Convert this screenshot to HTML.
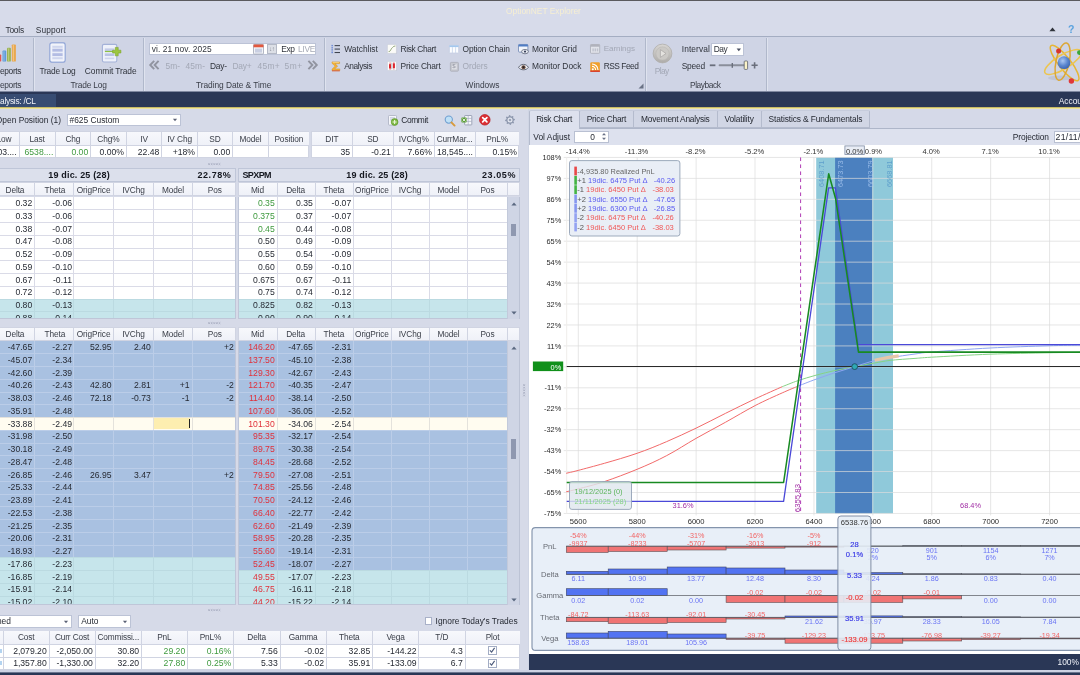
<!DOCTYPE html>
<html><head><meta charset="utf-8"><title>OptionNET Explorer</title>
<style>
html,body{margin:0;padding:0;background:#d6dae8;}
#app{will-change:transform;position:relative;width:1080px;height:675px;overflow:hidden;background:#d6dae8;font-family:"Liberation Sans",sans-serif;font-size:8.4px;color:#262a33;}
#app div{position:absolute;box-sizing:border-box;}
#app .t{white-space:pre;line-height:12px;height:12px;}
#app svg{overflow:visible;}
</style></head><body><div id="app">
<div style="left:0px;top:0px;width:1080px;height:37px;background:#d7dbea;"></div>
<div style="left:0px;top:0px;width:1080px;height:1.2px;background:#5a5a5e;"></div>
<div style="left:0px;top:36.2px;width:1080px;height:1px;background:#a4adc2;"></div>
<div style="left:0px;top:37.2px;width:1080px;height:54.3px;background:#cfd4e5;"></div>
<div style="left:0px;top:91px;width:1080px;height:1px;background:#7f88a0;"></div>
<div style="left:0px;top:92px;width:1080px;height:15px;background:#2a3756;"></div>
<div style="left:0px;top:107px;width:1080px;height:1px;background:#c8bb66;"></div>
<div style="left:0px;top:108px;width:1080px;height:1px;background:#eee39c;"></div>
<div style="left:0px;top:109px;width:1080px;height:1px;background:#dcdde4;"></div>
<div class="t" style="left:443.5px;width:200px;text-align:center;top:5px;color:#f6efd2;font-size:8.4px;">OptionNET Explorer</div>
<div class="t" style="left:5.5px;text-align:left;top:24px;color:#30343c;font-size:8.4px;letter-spacing:-0.238px;">Tools</div>
<div class="t" style="left:35.7px;text-align:left;top:24px;color:#30343c;font-size:8.4px;letter-spacing:0.112px;">Support</div>
<div style="left:32.7px;top:38px;width:1px;height:52.5px;background:#b0b8cb;"></div>
<div style="left:33.7px;top:38px;width:1px;height:52.5px;background:#dfe3ef;"></div>
<div style="left:142.7px;top:38px;width:1px;height:52.5px;background:#b0b8cb;"></div>
<div style="left:143.7px;top:38px;width:1px;height:52.5px;background:#dfe3ef;"></div>
<div style="left:324px;top:38px;width:1px;height:52.5px;background:#b0b8cb;"></div>
<div style="left:325px;top:38px;width:1px;height:52.5px;background:#dfe3ef;"></div>
<div style="left:644.5px;top:38px;width:1px;height:52.5px;background:#b0b8cb;"></div>
<div style="left:645.5px;top:38px;width:1px;height:52.5px;background:#dfe3ef;"></div>
<div style="left:766.2px;top:38px;width:1px;height:52.5px;background:#b0b8cb;"></div>
<div style="left:767.2px;top:38px;width:1px;height:52.5px;background:#dfe3ef;"></div>
<div class="t" style="left:-178.845px;width:200px;text-align:right;top:79px;color:#3a3e48;font-size:8.4px;letter-spacing:-0.345px;">Reports</div>
<div class="t" style="left:-11.391px;width:200px;text-align:center;top:79px;color:#3a3e48;font-size:8.4px;letter-spacing:-0.182px;">Trade Log</div>
<div class="t" style="left:133.668px;width:200px;text-align:center;top:79px;color:#3a3e48;font-size:8.4px;letter-spacing:-0.064px;">Trading Date &amp; Time</div>
<div class="t" style="left:382.481px;width:200px;text-align:center;top:79px;color:#3a3e48;font-size:8.4px;letter-spacing:-0.039px;">Windows</div>
<div class="t" style="left:605.286px;width:200px;text-align:center;top:79px;color:#3a3e48;font-size:8.4px;letter-spacing:-0.428px;">Playback</div>
<svg style="position:absolute;left:637.5px;top:83px" width="6" height="6" viewBox="0 0 6 6"><path d="M5.5 0.5V5.5H0.5Z" fill="#6a7285"/></svg>
<svg style="position:absolute;left:0px;top:43px" width="18" height="20" viewBox="0 0 18 20"><rect x="-2" y="11.4" width="3.2" height="7.2" rx="0.8" fill="#e25656"/><rect x="2.5" y="7.6" width="3.7" height="11" rx="0.9" fill="#5f9bd8"/><rect x="7" y="4.8" width="3.9" height="13.8" rx="0.9" fill="#9cb355"/><rect x="11.8" y="1.4" width="4.1" height="17.2" rx="0.9" fill="#e9a74e"/><rect x="12.8" y="2" width="1.2" height="16" fill="#f4cd92" fill-opacity="0.7"/><rect x="8" y="5.4" width="1.1" height="12.6" fill="#c3d48a" fill-opacity="0.7"/><rect x="3.4" y="8.2" width="1.1" height="9.8" fill="#a3c8ee" fill-opacity="0.7"/></svg>
<div class="t" style="left:-178.845px;width:200px;text-align:right;top:64.7px;color:#30343c;font-size:8.4px;letter-spacing:-0.345px;">Reports</div>
<svg style="position:absolute;left:49px;top:42px" width="17" height="21" viewBox="0 0 17 21"><rect x="0.9" y="0.9" width="15.2" height="19.2" rx="1.6" fill="#e9edf8" stroke="#8ea3d6" stroke-width="1.2"/><rect x="2.2" y="2.2" width="12.6" height="16.6" rx="0.8" fill="none" stroke="#f7f8fd" stroke-width="0.9"/><rect x="3.4" y="4.2" width="10.2" height="1.4" fill="#c9d0ec"/><rect x="3.4" y="6.8" width="10.2" height="2.8" fill="#b3bce3"/><rect x="3.4" y="11.2" width="10.2" height="2.8" fill="#b3bce3"/><rect x="3.4" y="15.4" width="10.2" height="1.4" fill="#c9d0ec"/></svg>
<div class="t" style="left:-42.6065px;width:200px;text-align:center;top:64.7px;color:#30343c;font-size:8.4px;letter-spacing:-0.213px;">Trade Log</div>
<svg style="position:absolute;left:101px;top:42.5px" width="21" height="20" viewBox="0 0 21 20"><rect x="1.4" y="1.4" width="14.4" height="17.6" rx="1.6" fill="#eef1fa" stroke="#a3b1d8" stroke-width="1.1"/><rect x="3.8" y="5.4" width="9.4" height="2.6" fill="#c3cbe8"/><rect x="3.8" y="10.4" width="9.4" height="2.6" fill="#b9c2e5"/><rect x="3.8" y="14.6" width="9.4" height="1.6" fill="#cfd5ee"/><rect x="3.9" y="7.9" width="9.4" height="1.2" fill="#8cc043"/><path d="M11.6 7.2h2.7V4.4h2.9v2.8h2.7v2.8h-2.7v2.8h-2.9v-2.8h-2.7z" fill="#9cc63f" stroke="#7da52c" stroke-width="0.6"/></svg>
<div class="t" style="left:10.6605px;width:200px;text-align:center;top:64.7px;color:#30343c;font-size:8.4px;letter-spacing:-0.079px;">Commit Trade</div>
<div style="left:149.3px;top:43px;width:167px;height:12.2px;background:#ffffff;border:1px solid #bcc3d6;box-sizing:border-box;"></div>
<div class="t" style="left:151.7px;text-align:left;top:43.2px;color:#30343c;font-size:8.4px;letter-spacing:0.102px;">vi. 21 nov. 2025</div>
<svg style="position:absolute;left:253px;top:43.8px" width="11" height="10.6" viewBox="0 0 11 10.6"><rect x="0.5" y="0.5" width="10" height="9.6" rx="0.8" fill="#f3f4f8" stroke="#a0a4b4" stroke-width="0.8"/><rect x="0.5" y="0.5" width="10" height="2.8" fill="#e2583e"/><rect x="2" y="4.6" width="7" height="4" fill="#c9cfe2"/></svg>
<div style="left:266.8px;top:44px;width:10.4px;height:10.2px;background:#dcdfe6;border:1px solid #b4b9c6;box-sizing:border-box;"></div>
<div class="t" style="left:171.7px;width:200px;text-align:center;top:43.3px;color:#8a8e9a;font-size:6.5px;letter-spacing:-0.6px;">↓↑</div>
<div class="t" style="left:281.2px;text-align:left;top:43.2px;color:#30343c;font-size:8.4px;letter-spacing:-0.317px;">Exp</div>
<div class="t" style="left:298px;text-align:left;top:43.2px;color:#a6aab6;font-size:8.4px;letter-spacing:-0.29px;">LIVE</div>
<svg style="position:absolute;left:148.5px;top:60.3px" width="11" height="10" viewBox="0 0 11 10"><path d="M5.2 0.8L1.2 5l4 4.2M9.6 0.8L5.6 5l4 4.2" fill="none" stroke="#9194a0" stroke-width="1.9"/></svg>
<div class="t" style="left:165.5px;text-align:left;top:59.7px;color:#a3a8b6;font-size:8.4px;letter-spacing:0.062px;">5m-</div>
<div class="t" style="left:185.5px;text-align:left;top:59.7px;color:#a3a8b6;font-size:8.4px;letter-spacing:0.151px;">45m-</div>
<div class="t" style="left:210px;text-align:left;top:59.7px;color:#30343c;font-size:8.4px;letter-spacing:-0.215px;">Day-</div>
<div class="t" style="left:232.5px;text-align:left;top:59.7px;color:#a3a8b6;font-size:8.4px;letter-spacing:-0.251px;">Day+</div>
<div class="t" style="left:257.5px;text-align:left;top:59.7px;color:#a3a8b6;font-size:8.4px;letter-spacing:0.281px;">45m+</div>
<div class="t" style="left:284.5px;text-align:left;top:59.7px;color:#a3a8b6;font-size:8.4px;letter-spacing:0.508px;">5m+</div>
<svg style="position:absolute;left:307px;top:60.3px" width="11" height="10" viewBox="0 0 11 10"><path d="M1.4 0.8L5.4 5l-4 4.2M5.8 0.8L9.8 5l-4 4.2" fill="none" stroke="#9194a0" stroke-width="1.9"/></svg>
<div class="t" style="left:344.2px;text-align:left;top:43.3px;color:#30343c;font-size:8.4px;letter-spacing:0.002px;">Watchlist</div>
<div class="t" style="left:344.2px;text-align:left;top:60.4px;color:#30343c;font-size:8.4px;letter-spacing:-0.42px;">Analysis</div>
<div class="t" style="left:400.5px;text-align:left;top:43.3px;color:#30343c;font-size:8.4px;letter-spacing:-0.374px;">Risk Chart</div>
<div class="t" style="left:400.5px;text-align:left;top:60.4px;color:#30343c;font-size:8.4px;letter-spacing:-0.167px;">Price Chart</div>
<div class="t" style="left:462.5px;text-align:left;top:43.3px;color:#30343c;font-size:8.4px;letter-spacing:-0.131px;">Option Chain</div>
<div class="t" style="left:462.5px;text-align:left;top:60.4px;color:#a3a8b6;font-size:8.4px;letter-spacing:-0.066px;">Orders</div>
<div class="t" style="left:532px;text-align:left;top:43.3px;color:#30343c;font-size:8.4px;letter-spacing:-0.102px;">Monitor Grid</div>
<div class="t" style="left:532px;text-align:left;top:60.4px;color:#30343c;font-size:8.4px;letter-spacing:0.01px;">Monitor Dock</div>
<div class="t" style="left:603.7px;text-align:left;top:43.3px;color:#a3a8b6;font-size:8.1px;letter-spacing:-0.094px;">Earnings</div>
<div class="t" style="left:603.7px;text-align:left;top:60.4px;color:#30343c;font-size:8.4px;letter-spacing:-0.487px;">RSS Feed</div>
<svg style="position:absolute;left:331px;top:44.4px" width="10" height="10" viewBox="0 0 10 10"><g fill="#5c7ed2"><rect x="0.5" y="0.9" width="1.3" height="1.3"/><rect x="0.5" y="2.9" width="1.3" height="1"/><rect x="0.5" y="4.5" width="1.3" height="1.3"/><rect x="0.5" y="6.4" width="1.3" height="1"/><rect x="0.5" y="7.9" width="1.3" height="1.3"/></g><g fill="#3e434f"><rect x="3.6" y="1.1" width="5.4" height="1.05"/><rect x="3.6" y="4.55" width="5.4" height="1.05"/><rect x="3.6" y="8" width="5.4" height="1.05"/></g></svg>
<svg style="position:absolute;left:331px;top:60.6px" width="10" height="10.5" viewBox="0 0 10 10.5"><path d="M1 0.9H8.6V2.6H4L6.6 5.1L3.8 7.9H8.8V9.6H1V8.2L4.2 5.1L1 2.3Z" fill="#f2b236" stroke="#d8901c" stroke-width="0.5"/><path d="M1.6 1.5H8" stroke="#fbe29a" stroke-width="0.6"/><rect x="1" y="9.4" width="7.8" height="0.9" fill="#d8563e"/></svg>
<svg style="position:absolute;left:386.8px;top:44px" width="10.4" height="10.4" viewBox="0 0 10.4 10.4"><rect x="0.9" y="0.9" width="9.2" height="9.2" rx="0.6" fill="#c4c8d6"/><rect x="0.4" y="0.4" width="9" height="9" rx="0.6" fill="#fbfbf8" stroke="#c8ccd8" stroke-width="0.6"/><path d="M1.6 7.6C4 7.6 3.6 5.2 4.8 4.2S6 2.2 8.4 2" fill="none" stroke="#8aa070" stroke-width="0.9"/></svg>
<svg style="position:absolute;left:386.8px;top:60.8px" width="10.4" height="10.4" viewBox="0 0 10.4 10.4"><rect x="0.9" y="0.9" width="9.2" height="9.2" rx="0.6" fill="#c4c8d6"/><rect x="0.4" y="0.4" width="9" height="9" rx="0.6" fill="#fdfdfe" stroke="#c8ccd8" stroke-width="0.6"/><rect x="2" y="3.2" width="2" height="4.2" fill="#dc2a30"/><rect x="2.7" y="1.4" width="0.7" height="7.4" fill="#dc2a30"/><rect x="5.9" y="2.4" width="2" height="4.6" fill="#dc2a30"/><rect x="6.6" y="1.2" width="0.7" height="7.4" fill="#dc2a30"/><rect x="4.6" y="1.6" width="0.6" height="6.6" fill="#8a8e9a"/></svg>
<svg style="position:absolute;left:448.8px;top:44.8px" width="10" height="8.6" viewBox="0 0 10 8.6"><rect x="0.4" y="0.4" width="9.2" height="7.6" rx="0.6" fill="#fcfdff" stroke="#c3cde2" stroke-width="0.7"/><rect x="0.4" y="0.4" width="9.2" height="1.7" fill="#a4c8ee"/><path d="M3.4 2.1V8M6.6 2.1V8" stroke="#c6d3ea" stroke-width="0.8"/></svg>
<svg style="position:absolute;left:449.6px;top:61.6px" width="9" height="9.6" viewBox="0 0 9 9.6"><rect x="0.4" y="0.4" width="8" height="8.8" rx="0.8" fill="#c6c8d0" stroke="#a9acb6" stroke-width="0.8"/><rect x="2" y="2.2" width="4.8" height="5.2" fill="#dfe0e6"/></svg>
<div class="t" style="left:354px;width:200px;text-align:center;top:60.2px;color:#8f929e;font-size:6px;">$</div>
<svg style="position:absolute;left:518.4px;top:44.4px" width="11" height="10.4" viewBox="0 0 11 10.4"><rect x="0.5" y="0.5" width="9.4" height="7.6" rx="0.8" fill="#f2f5fb" stroke="#6e86b4" stroke-width="0.8"/><rect x="0.5" y="0.5" width="9.4" height="2" fill="#4f7cc4"/><ellipse cx="7" cy="7.6" rx="3.4" ry="2.2" fill="#e9ecf3" stroke="#50586c" stroke-width="0.7"/><circle cx="7" cy="7.6" r="1.1" fill="#39415a"/></svg>
<svg style="position:absolute;left:518.4px;top:62.6px" width="11" height="8" viewBox="0 0 11 8"><path d="M0.6 4.4C2.6 0.4 8.4 0.4 10.4 4.4C8.4 7.6 2.6 7.6 0.6 4.4Z" fill="#eceef3" stroke="#4a4f5e" stroke-width="0.8"/><circle cx="5.5" cy="4.2" r="2" fill="#6a4a3a"/><circle cx="5.5" cy="4.2" r="0.9" fill="#20222a"/></svg>
<svg style="position:absolute;left:590px;top:44.4px" width="10.4" height="10" viewBox="0 0 10.4 10"><rect x="0.5" y="0.5" width="9.2" height="8.8" rx="0.8" fill="#e1e3ea" stroke="#a9acb6" stroke-width="0.8"/><rect x="0.5" y="0.5" width="9.2" height="2.2" fill="#b0b2bc"/><rect x="2.4" y="4.4" width="1.4" height="3" fill="#bfc2cd"/><rect x="4.6" y="4.4" width="1.4" height="3" fill="#bfc2cd"/><rect x="6.8" y="4.4" width="1.4" height="3" fill="#bfc2cd"/></svg>
<svg style="position:absolute;left:590px;top:61.6px" width="10.2" height="10.4" viewBox="0 0 10.2 10.4"><rect x="0.3" y="0.3" width="9.6" height="9.4" rx="1.2" fill="#f0a02c"/><rect x="0.3" y="8.4" width="9.6" height="1.6" fill="#d8422e"/><circle cx="2.8" cy="7.2" r="1" fill="#fff"/><path d="M2 4.4A3.6 3.6 0 0 1 5.6 8M2 2A6 6 0 0 1 8 8" fill="none" stroke="#fff" stroke-width="1.1"/></svg>
<svg style="position:absolute;left:651.5px;top:42.5px" width="21" height="21" viewBox="0 0 21 21"><defs><linearGradient id="pg" x1="0" y1="0" x2="0" y2="1"><stop offset="0" stop-color="#d8d6d3"/><stop offset="1" stop-color="#aeacaa"/></linearGradient></defs><circle cx="10.5" cy="10.5" r="9.4" fill="url(#pg)" stroke="#b0aeac" stroke-width="0.8"/><circle cx="10.5" cy="10.5" r="6.6" fill="#cbc9c6" stroke="#bab8b6" stroke-width="0.6"/><path d="M8.4 6.6L14 10.5L8.4 14.4Z" fill="#e4e2df" stroke="#a6a4a2" stroke-width="0.7"/></svg>
<div class="t" style="left:561.708px;width:200px;text-align:center;top:64.8px;color:#a3a8b6;font-size:8.4px;letter-spacing:-0.584px;">Play</div>
<div class="t" style="left:681.7px;text-align:left;top:43.3px;color:#30343c;font-size:8.4px;letter-spacing:0.113px;">Interval</div>
<div style="left:710.5px;top:43px;width:33px;height:12.5px;background:#ffffff;border:1px solid #bcc3d6;box-sizing:border-box;"></div>
<div class="t" style="left:713.7px;text-align:left;top:43.3px;color:#30343c;font-size:8.4px;letter-spacing:-0.424px;">Day</div>
<svg style="position:absolute;left:735.6px;top:47.6px" width="6" height="4" viewBox="0 0 6 4"><path d="M0.6 0.6H5L2.8 3.2Z" fill="#4a5062"/></svg>
<div class="t" style="left:681.7px;text-align:left;top:60.3px;color:#30343c;font-size:8.4px;letter-spacing:-0.175px;">Speed</div>
<svg style="position:absolute;left:708.5px;top:59.6px" width="50" height="11" viewBox="0 0 50 11"><rect x="0.8" y="4.4" width="5.6" height="1.8" fill="#6a6f7c"/><rect x="9.6" y="4.3" width="27" height="2" rx="1" fill="#8a8e9a"/><rect x="22.6" y="3" width="1.4" height="4.8" fill="#6a6f7c"/><rect x="35.2" y="1" width="3.4" height="8.4" rx="0.8" fill="#fbf3c8" stroke="#5a5f6c" stroke-width="0.8"/><path d="M45.6 2.2V8.4M42.5 5.3H48.7" stroke="#6a6f7c" stroke-width="1.6"/></svg>
<svg style="position:absolute;left:1048.5px;top:27px" width="7" height="5" viewBox="0 0 7 5"><path d="M3.5 0.6L6.6 4.2H0.4Z" fill="#30343c"/></svg>
<div class="t" style="left:971.3px;width:200px;text-align:center;top:23px;color:#5aa2de;font-size:10.5px;font-weight:bold;">?</div>
<svg style="position:absolute;left:1036px;top:38px" width="44" height="52" viewBox="0 0 44 52"><defs><radialGradient id="sph" cx="0.4" cy="0.35" r="0.7"><stop offset="0" stop-color="#a9c6f2"/><stop offset="0.55" stop-color="#5a86cf"/><stop offset="1" stop-color="#3a62ac"/></radialGradient></defs><ellipse cx="24" cy="40" rx="12" ry="2.6" fill="#b9bfd0" fill-opacity="0.7"/><ellipse cx="28.6" cy="25" rx="22" ry="6" fill="none" stroke="#e6b636" stroke-width="1.5" transform="rotate(52 28.6 25)"/><ellipse cx="27" cy="24" rx="21" ry="7" fill="none" stroke="#ecc550" stroke-width="1.5" transform="rotate(-31 27 24)"/><ellipse cx="26.6" cy="23.6" rx="19" ry="6.6" fill="none" stroke="#dca634" stroke-width="1.5" transform="rotate(-78 26.6 23.6)"/><circle cx="28" cy="24.7" r="6.4" fill="url(#sph)"/><circle cx="22.6" cy="13" r="2.5" fill="#d8362c"/><circle cx="35.4" cy="43" r="2.7" fill="#e0383a"/><circle cx="43.4" cy="14.6" r="2.4" fill="#3aa83a"/></svg>
<div style="left:0px;top:94px;width:55.6px;height:13px;background:#374c72;"></div>
<div class="t" style="left:-164.381px;width:200px;text-align:right;top:95.2px;color:#f2f4fa;font-size:8.4px;letter-spacing:-0.281px;">Analysis: /CL</div>
<div class="t" style="left:1058.7px;text-align:left;top:95.2px;color:#f2f4fa;font-size:8.4px;">Account</div>
<div style="left:0px;top:109px;width:526.3px;height:562px;background:#d6dae8;"></div>
<div style="left:527.5px;top:109px;width:1.3px;height:562px;background:#cfd5e4;"></div>
<div class="t" style="left:-139px;width:200px;text-align:right;top:113.8px;color:#262a33;font-size:8.4px;">Open Position (1)</div>
<div style="left:67px;top:114.3px;width:113.6px;height:11.5px;background:#ffffff;border:1px solid #bcc3d6;"></div><div class="t" style="left:69.5px;text-align:left;top:114.15px;color:#262a33;font-size:8.4px;">#625 Custom</div><svg style="position:absolute;left:171.8px;top:118.25px" width="6" height="4" viewBox="0 0 6 4"><path d="M0.9 0.8H5.1L3 3.2Z" fill="#5a6074"/></svg>
<svg style="position:absolute;left:388px;top:114.5px" width="11" height="11" viewBox="0 0 11 11"><rect x="0.5" y="0.5" width="8" height="9.6" rx="0.8" fill="#f5f6fa" stroke="#a9afc0" stroke-width="0.8"/><rect x="2" y="2.4" width="5" height="1" fill="#b9c1d8"/><rect x="2" y="4.4" width="4" height="1" fill="#b9c1d8"/><circle cx="6.6" cy="7" r="3.4" fill="#7db843" stroke="#5a9426" stroke-width="0.6"/><path d="M4.6 7h4M6.6 5v4" stroke="#eaf6d8" stroke-width="1.1"/></svg>
<div class="t" style="left:401.2px;text-align:left;top:113.9px;color:#262a33;font-size:8.4px;letter-spacing:-0.338px;">Commit</div>
<svg style="position:absolute;left:444px;top:114.5px" width="12" height="11.5" viewBox="0 0 12 11.5"><circle cx="4.8" cy="4.6" r="3.6" fill="#bfe0f6" stroke="#6f9fd0" stroke-width="1.1"/><path d="M7.4 7.4L10.6 10.6" stroke="#d89a3a" stroke-width="1.9" stroke-linecap="round"/></svg>
<svg style="position:absolute;left:461px;top:114.6px" width="11.5" height="10.5" viewBox="0 0 11.5 10.5"><rect x="3.6" y="0.5" width="7.2" height="9.4" rx="0.6" fill="#f6f7fb" stroke="#8c93a8" stroke-width="0.8"/><path d="M3.6 3.4H10.8M3.6 6.4H10.8M7.2 0.5V9.9" stroke="#a6adc2" stroke-width="0.7"/><rect x="0.4" y="2.4" width="5.2" height="5" rx="0.6" fill="#5ea03a"/><path d="M1.6 3.6L4.4 6.4M4.4 3.6L1.6 6.4" stroke="#fff" stroke-width="0.8"/></svg>
<svg style="position:absolute;left:478.6px;top:114.2px" width="11.6" height="11.6" viewBox="0 0 11.6 11.6"><circle cx="5.8" cy="5.8" r="5.3" fill="#dc2f34" stroke="#b41c22" stroke-width="0.7"/><path d="M3.7 3.7L7.9 7.9M7.9 3.7L3.7 7.9" stroke="#fff" stroke-width="1.7" stroke-linecap="round"/></svg>
<svg style="position:absolute;left:505.4px;top:115.2px" width="10" height="10" viewBox="0 0 10 10"><path d="M9.81 4.04L9.90 5.00L8.63 5.72L8.42 6.42L9.07 7.72L8.46 8.46L7.06 8.08L6.42 8.42L5.96 9.81L5.00 9.90L4.28 8.63L3.58 8.42L2.28 9.07L1.54 8.46L1.92 7.06L1.58 6.42L0.19 5.96L0.10 5.00L1.37 4.28L1.58 3.58L0.93 2.28L1.54 1.54L2.94 1.92L3.58 1.58L4.04 0.19L5.00 0.10L5.72 1.37L6.42 1.58L7.72 0.93L8.46 1.54L8.08 2.94L8.42 3.58Z" fill="#8e98ae"/><circle cx="5" cy="5" r="2.5" fill="#e4e7f0"/><circle cx="5" cy="5" r="1.3" fill="#9aa3b8"/></svg>
<div style="left:-2px;top:131.3px;width:311.3px;height:27px;background:#ffffff;border:1px solid #d0d4e2;"></div><div style="left:-1.5px;top:131.8px;width:310.3px;height:13.5px;background:linear-gradient(#f7f8fc,#eff1f8);"></div><div style="left:-2px;top:144.9px;width:311.3px;height:1px;background:#d0d4e2;"></div><div style="left:18.5px;top:131.3px;width:1px;height:27px;background:#d0d4e2;"></div><div style="left:54.8px;top:131.3px;width:1px;height:27px;background:#d0d4e2;"></div><div style="left:90.1px;top:131.3px;width:1px;height:27px;background:#d0d4e2;"></div><div style="left:125.8px;top:131.3px;width:1px;height:27px;background:#d0d4e2;"></div><div style="left:161.3px;top:131.3px;width:1px;height:27px;background:#d0d4e2;"></div><div style="left:196.9px;top:131.3px;width:1px;height:27px;background:#d0d4e2;"></div><div style="left:232.1px;top:131.3px;width:1px;height:27px;background:#d0d4e2;"></div><div style="left:267.9px;top:131.3px;width:1px;height:27px;background:#d0d4e2;"></div><div class="t" style="left:-62.9px;width:200px;text-align:center;top:132.6px;color:#3c404a;font-size:8.3px;letter-spacing:-0.1px;">Last</div><div class="t" style="left:-27.1px;width:200px;text-align:center;top:132.6px;color:#3c404a;font-size:8.3px;letter-spacing:-0.1px;">Chg</div><div class="t" style="left:8.4px;width:200px;text-align:center;top:132.6px;color:#3c404a;font-size:8.3px;letter-spacing:-0.1px;">Chg%</div><div class="t" style="left:44px;width:200px;text-align:center;top:132.6px;color:#3c404a;font-size:8.3px;letter-spacing:-0.1px;">IV</div><div class="t" style="left:79.55px;width:200px;text-align:center;top:132.6px;color:#3c404a;font-size:8.3px;letter-spacing:-0.1px;">IV Chg</div><div class="t" style="left:114.95px;width:200px;text-align:center;top:132.6px;color:#3c404a;font-size:8.3px;letter-spacing:-0.1px;">SD</div><div class="t" style="left:150.45px;width:200px;text-align:center;top:132.6px;color:#3c404a;font-size:8.3px;letter-spacing:-0.1px;">Model</div><div class="t" style="left:188.8px;width:200px;text-align:center;top:132.6px;color:#3c404a;font-size:8.3px;letter-spacing:-0.1px;">Position</div><div class="t" style="left:-183.4px;width:200px;text-align:right;top:146.4px;color:#262a33;font-size:8.65px;">03....</div><div class="t" style="left:24.5px;text-align:left;top:146.4px;color:#3f9a3f;font-size:8.65px;">6538....</div><div class="t" style="left:-111.8px;width:200px;text-align:right;top:146.4px;color:#3f9a3f;font-size:8.65px;">0.00</div><div class="t" style="left:-76.1px;width:200px;text-align:right;top:146.4px;color:#262a33;font-size:8.65px;">0.00%</div><div class="t" style="left:-40.6px;width:200px;text-align:right;top:146.4px;color:#262a33;font-size:8.65px;">22.48</div><div class="t" style="left:-5px;width:200px;text-align:right;top:146.4px;color:#262a33;font-size:8.65px;">+18%</div><div class="t" style="left:30.2px;width:200px;text-align:right;top:146.4px;color:#262a33;font-size:8.65px;">0.00</div>
<div class="t" style="left:-188.5px;width:200px;text-align:right;top:132.6px;color:#3c404a;font-size:8.3px;letter-spacing:-0.1px;">Low</div>
<div style="left:311.3px;top:131.3px;width:208px;height:27px;background:#ffffff;border:1px solid #d0d4e2;"></div><div style="left:311.8px;top:131.8px;width:207px;height:13.5px;background:linear-gradient(#f7f8fc,#eff1f8);"></div><div style="left:311.3px;top:144.9px;width:208px;height:1px;background:#d0d4e2;"></div><div style="left:352px;top:131.3px;width:1px;height:27px;background:#d0d4e2;"></div><div style="left:392.8px;top:131.3px;width:1px;height:27px;background:#d0d4e2;"></div><div style="left:433.8px;top:131.3px;width:1px;height:27px;background:#d0d4e2;"></div><div style="left:474.5px;top:131.3px;width:1px;height:27px;background:#d0d4e2;"></div><div class="t" style="left:231.85px;width:200px;text-align:center;top:132.6px;color:#3c404a;font-size:8.3px;letter-spacing:-0.1px;">DIT</div><div class="t" style="left:272.85px;width:200px;text-align:center;top:132.6px;color:#3c404a;font-size:8.3px;letter-spacing:-0.1px;">SD</div><div class="t" style="left:313.75px;width:200px;text-align:center;top:132.6px;color:#3c404a;font-size:8.3px;letter-spacing:-0.1px;">IVChg%</div><div class="t" style="left:354.6px;width:200px;text-align:center;top:132.6px;color:#3c404a;font-size:8.3px;letter-spacing:-0.1px;">CurrMar...</div><div class="t" style="left:397.1px;width:200px;text-align:center;top:132.6px;color:#3c404a;font-size:8.3px;letter-spacing:-0.1px;">PnL%</div><div class="t" style="left:150.1px;width:200px;text-align:right;top:146.4px;color:#262a33;font-size:8.65px;">35</div><div class="t" style="left:190.9px;width:200px;text-align:right;top:146.4px;color:#262a33;font-size:8.65px;">-0.21</div><div class="t" style="left:231.9px;width:200px;text-align:right;top:146.4px;color:#262a33;font-size:8.65px;">7.66%</div><div class="t" style="left:437px;text-align:left;top:146.4px;color:#262a33;font-size:8.65px;">18,545....</div><div class="t" style="left:316.9px;width:200px;text-align:right;top:146.4px;color:#262a33;font-size:8.65px;">0.15%</div>
<svg style="position:absolute;left:207.5px;top:162.6px" width="14" height="3" viewBox="0 0 14 3"><path d="M0.3 0.3l1.6 1.6m0 -1.6l-1.6 1.6" stroke="#a4aabe" stroke-width="0.8"/><path d="M2.9 0.3l1.6 1.6m0 -1.6l-1.6 1.6" stroke="#a4aabe" stroke-width="0.8"/><path d="M5.5 0.3l1.6 1.6m0 -1.6l-1.6 1.6" stroke="#a4aabe" stroke-width="0.8"/><path d="M8.100000000000001 0.3l1.6 1.6m0 -1.6l-1.6 1.6" stroke="#a4aabe" stroke-width="0.8"/><path d="M10.700000000000001 0.3l1.6 1.6m0 -1.6l-1.6 1.6" stroke="#a4aabe" stroke-width="0.8"/></svg>
<svg style="position:absolute;left:207.5px;top:322px" width="14" height="3" viewBox="0 0 14 3"><path d="M0.3 0.3l1.6 1.6m0 -1.6l-1.6 1.6" stroke="#a4aabe" stroke-width="0.8"/><path d="M2.9 0.3l1.6 1.6m0 -1.6l-1.6 1.6" stroke="#a4aabe" stroke-width="0.8"/><path d="M5.5 0.3l1.6 1.6m0 -1.6l-1.6 1.6" stroke="#a4aabe" stroke-width="0.8"/><path d="M8.100000000000001 0.3l1.6 1.6m0 -1.6l-1.6 1.6" stroke="#a4aabe" stroke-width="0.8"/><path d="M10.700000000000001 0.3l1.6 1.6m0 -1.6l-1.6 1.6" stroke="#a4aabe" stroke-width="0.8"/></svg>
<svg style="position:absolute;left:207.5px;top:609px" width="14" height="3" viewBox="0 0 14 3"><path d="M0.3 0.3l1.6 1.6m0 -1.6l-1.6 1.6" stroke="#a4aabe" stroke-width="0.8"/><path d="M2.9 0.3l1.6 1.6m0 -1.6l-1.6 1.6" stroke="#a4aabe" stroke-width="0.8"/><path d="M5.5 0.3l1.6 1.6m0 -1.6l-1.6 1.6" stroke="#a4aabe" stroke-width="0.8"/><path d="M8.100000000000001 0.3l1.6 1.6m0 -1.6l-1.6 1.6" stroke="#a4aabe" stroke-width="0.8"/><path d="M10.700000000000001 0.3l1.6 1.6m0 -1.6l-1.6 1.6" stroke="#a4aabe" stroke-width="0.8"/></svg>
<div style="left:-2px;top:167.5px;width:237.8px;height:14.5px;background:#dce0ec;border:1px solid #bfc6d8;"></div>
<div style="left:238.4px;top:167.5px;width:281.4px;height:14.5px;background:#dce0ec;border:1px solid #bfc6d8;"></div>
<div class="t" style="left:-20.9155px;width:200px;text-align:center;top:169.2px;color:#14171f;font-size:9px;font-weight:bold;letter-spacing:0.169px;">19 dic. 25 (28)</div>
<div class="t" style="left:31.375px;width:200px;text-align:right;top:169.2px;color:#14171f;font-size:9px;font-weight:bold;letter-spacing:0.575px;">22.78%</div>
<div class="t" style="left:242.4px;text-align:left;top:169.2px;color:#14171f;font-size:9px;font-weight:bold;letter-spacing:-0.577px;">SPXPM</div>
<div class="t" style="left:277.084px;width:200px;text-align:center;top:169.2px;color:#14171f;font-size:9px;font-weight:bold;letter-spacing:0.169px;">19 dic. 25 (28)</div>
<div class="t" style="left:315.975px;width:200px;text-align:right;top:169.2px;color:#14171f;font-size:9px;font-weight:bold;letter-spacing:0.575px;">23.05%</div>
<div style="left:-2px;top:182.4px;width:237.8px;height:14px;background:linear-gradient(#f7f8fc,#eff1f8);border:1px solid #d0d4e2;"></div><div style="left:238.4px;top:182.4px;width:281.4px;height:14px;background:linear-gradient(#f7f8fc,#eff1f8);border:1px solid #d0d4e2;"></div><div style="left:34px;top:182.4px;width:1px;height:14px;background:#d0d4e2;"></div><div style="left:73.3px;top:182.4px;width:1px;height:14px;background:#d0d4e2;"></div><div style="left:112.8px;top:182.4px;width:1px;height:14px;background:#d0d4e2;"></div><div style="left:152.5px;top:182.4px;width:1px;height:14px;background:#d0d4e2;"></div><div style="left:192px;top:182.4px;width:1px;height:14px;background:#d0d4e2;"></div><div style="left:276.5px;top:182.4px;width:1px;height:14px;background:#d0d4e2;"></div><div style="left:314.5px;top:182.4px;width:1px;height:14px;background:#d0d4e2;"></div><div style="left:352.7px;top:182.4px;width:1px;height:14px;background:#d0d4e2;"></div><div style="left:390.7px;top:182.4px;width:1px;height:14px;background:#d0d4e2;"></div><div style="left:428.8px;top:182.4px;width:1px;height:14px;background:#d0d4e2;"></div><div style="left:467px;top:182.4px;width:1px;height:14px;background:#d0d4e2;"></div><div style="left:506.5px;top:182.4px;width:1px;height:14px;background:#d0d4e2;"></div><div class="t" style="left:-85.05px;width:200px;text-align:center;top:183.7px;color:#3c404a;font-size:8.3px;letter-spacing:-0.1px;">Delta</div><div class="t" style="left:-45.05px;width:200px;text-align:center;top:183.7px;color:#3c404a;font-size:8.3px;letter-spacing:-0.1px;">Theta</div><div class="t" style="left:-6.45px;width:200px;text-align:center;top:183.7px;color:#3c404a;font-size:8.3px;letter-spacing:-0.1px;">OrigPrice</div><div class="t" style="left:33.45px;width:200px;text-align:center;top:183.7px;color:#3c404a;font-size:8.3px;letter-spacing:-0.1px;">IVChg</div><div class="t" style="left:72.95px;width:200px;text-align:center;top:183.7px;color:#3c404a;font-size:8.3px;letter-spacing:-0.1px;">Model</div><div class="t" style="left:114.75px;width:200px;text-align:center;top:183.7px;color:#3c404a;font-size:8.3px;letter-spacing:-0.1px;">Pos</div><div class="t" style="left:157.45px;width:200px;text-align:center;top:183.7px;color:#3c404a;font-size:8.3px;letter-spacing:-0.1px;">Mid</div><div class="t" style="left:195.65px;width:200px;text-align:center;top:183.7px;color:#3c404a;font-size:8.3px;letter-spacing:-0.1px;">Delta</div><div class="t" style="left:233.95px;width:200px;text-align:center;top:183.7px;color:#3c404a;font-size:8.3px;letter-spacing:-0.1px;">Theta</div><div class="t" style="left:271.95px;width:200px;text-align:center;top:183.7px;color:#3c404a;font-size:8.3px;letter-spacing:-0.1px;">OrigPrice</div><div class="t" style="left:309.95px;width:200px;text-align:center;top:183.7px;color:#3c404a;font-size:8.3px;letter-spacing:-0.1px;">IVChg</div><div class="t" style="left:348.45px;width:200px;text-align:center;top:183.7px;color:#3c404a;font-size:8.3px;letter-spacing:-0.1px;">Model</div><div class="t" style="left:387.45px;width:200px;text-align:center;top:183.7px;color:#3c404a;font-size:8.3px;letter-spacing:-0.1px;">Pos</div>
<div style="left:0px;top:196.5px;width:519.8px;height:122.1px;overflow:hidden;"><div style="left:-2px;top:0px;width:237.8px;height:13.75px;background:#ffffff;border-top:1px solid #ffffff;"></div><div style="left:238.4px;top:0px;width:268.6px;height:13.75px;background:#ffffff;border-top:1px solid #ffffff;"></div><div style="left:34px;top:0px;width:1px;height:12.75px;background:#dadbe7;"></div><div style="left:73.3px;top:0px;width:1px;height:12.75px;background:#dadbe7;"></div><div style="left:112.8px;top:0px;width:1px;height:12.75px;background:#dadbe7;"></div><div style="left:152.5px;top:0px;width:1px;height:12.75px;background:#dadbe7;"></div><div style="left:192px;top:0px;width:1px;height:12.75px;background:#dadbe7;"></div><div style="left:276.5px;top:0px;width:1px;height:12.75px;background:#dadbe7;"></div><div style="left:314.5px;top:0px;width:1px;height:12.75px;background:#dadbe7;"></div><div style="left:352.7px;top:0px;width:1px;height:12.75px;background:#dadbe7;"></div><div style="left:390.7px;top:0px;width:1px;height:12.75px;background:#dadbe7;"></div><div style="left:428.8px;top:0px;width:1px;height:12.75px;background:#dadbe7;"></div><div style="left:467px;top:0px;width:1px;height:12.75px;background:#dadbe7;"></div><div class="t" style="left:-167.8px;width:200px;text-align:right;top:0.575px;color:#262a33;font-size:8.65px;">0.32</div><div class="t" style="left:-128px;width:200px;text-align:right;top:0.575px;color:#262a33;font-size:8.65px;">-0.06</div><div class="t" style="left:74.7px;width:200px;text-align:right;top:0.575px;color:#3f9a3f;font-size:8.65px;">0.35</div><div class="t" style="left:112.8px;width:200px;text-align:right;top:0.575px;color:#262a33;font-size:8.65px;">0.35</div><div class="t" style="left:151.2px;width:200px;text-align:right;top:0.575px;color:#262a33;font-size:8.65px;">-0.07</div><div style="left:-2px;top:12.75px;width:237.8px;height:13.75px;background:#ffffff;border-top:1px solid #dadbe7;"></div><div style="left:238.4px;top:12.75px;width:268.6px;height:13.75px;background:#ffffff;border-top:1px solid #dadbe7;"></div><div style="left:34px;top:12.75px;width:1px;height:12.75px;background:#dadbe7;"></div><div style="left:73.3px;top:12.75px;width:1px;height:12.75px;background:#dadbe7;"></div><div style="left:112.8px;top:12.75px;width:1px;height:12.75px;background:#dadbe7;"></div><div style="left:152.5px;top:12.75px;width:1px;height:12.75px;background:#dadbe7;"></div><div style="left:192px;top:12.75px;width:1px;height:12.75px;background:#dadbe7;"></div><div style="left:276.5px;top:12.75px;width:1px;height:12.75px;background:#dadbe7;"></div><div style="left:314.5px;top:12.75px;width:1px;height:12.75px;background:#dadbe7;"></div><div style="left:352.7px;top:12.75px;width:1px;height:12.75px;background:#dadbe7;"></div><div style="left:390.7px;top:12.75px;width:1px;height:12.75px;background:#dadbe7;"></div><div style="left:428.8px;top:12.75px;width:1px;height:12.75px;background:#dadbe7;"></div><div style="left:467px;top:12.75px;width:1px;height:12.75px;background:#dadbe7;"></div><div class="t" style="left:-167.8px;width:200px;text-align:right;top:13.325px;color:#262a33;font-size:8.65px;">0.33</div><div class="t" style="left:-128px;width:200px;text-align:right;top:13.325px;color:#262a33;font-size:8.65px;">-0.06</div><div class="t" style="left:74.7px;width:200px;text-align:right;top:13.325px;color:#3f9a3f;font-size:8.65px;">0.375</div><div class="t" style="left:112.8px;width:200px;text-align:right;top:13.325px;color:#262a33;font-size:8.65px;">0.37</div><div class="t" style="left:151.2px;width:200px;text-align:right;top:13.325px;color:#262a33;font-size:8.65px;">-0.07</div><div style="left:-2px;top:25.5px;width:237.8px;height:13.75px;background:#ffffff;border-top:1px solid #dadbe7;"></div><div style="left:238.4px;top:25.5px;width:268.6px;height:13.75px;background:#ffffff;border-top:1px solid #dadbe7;"></div><div style="left:34px;top:25.5px;width:1px;height:12.75px;background:#dadbe7;"></div><div style="left:73.3px;top:25.5px;width:1px;height:12.75px;background:#dadbe7;"></div><div style="left:112.8px;top:25.5px;width:1px;height:12.75px;background:#dadbe7;"></div><div style="left:152.5px;top:25.5px;width:1px;height:12.75px;background:#dadbe7;"></div><div style="left:192px;top:25.5px;width:1px;height:12.75px;background:#dadbe7;"></div><div style="left:276.5px;top:25.5px;width:1px;height:12.75px;background:#dadbe7;"></div><div style="left:314.5px;top:25.5px;width:1px;height:12.75px;background:#dadbe7;"></div><div style="left:352.7px;top:25.5px;width:1px;height:12.75px;background:#dadbe7;"></div><div style="left:390.7px;top:25.5px;width:1px;height:12.75px;background:#dadbe7;"></div><div style="left:428.8px;top:25.5px;width:1px;height:12.75px;background:#dadbe7;"></div><div style="left:467px;top:25.5px;width:1px;height:12.75px;background:#dadbe7;"></div><div class="t" style="left:-167.8px;width:200px;text-align:right;top:26.075px;color:#262a33;font-size:8.65px;">0.38</div><div class="t" style="left:-128px;width:200px;text-align:right;top:26.075px;color:#262a33;font-size:8.65px;">-0.07</div><div class="t" style="left:74.7px;width:200px;text-align:right;top:26.075px;color:#3f9a3f;font-size:8.65px;">0.45</div><div class="t" style="left:112.8px;width:200px;text-align:right;top:26.075px;color:#262a33;font-size:8.65px;">0.44</div><div class="t" style="left:151.2px;width:200px;text-align:right;top:26.075px;color:#262a33;font-size:8.65px;">-0.08</div><div style="left:-2px;top:38.25px;width:237.8px;height:13.75px;background:#ffffff;border-top:1px solid #dadbe7;"></div><div style="left:238.4px;top:38.25px;width:268.6px;height:13.75px;background:#ffffff;border-top:1px solid #dadbe7;"></div><div style="left:34px;top:38.25px;width:1px;height:12.75px;background:#dadbe7;"></div><div style="left:73.3px;top:38.25px;width:1px;height:12.75px;background:#dadbe7;"></div><div style="left:112.8px;top:38.25px;width:1px;height:12.75px;background:#dadbe7;"></div><div style="left:152.5px;top:38.25px;width:1px;height:12.75px;background:#dadbe7;"></div><div style="left:192px;top:38.25px;width:1px;height:12.75px;background:#dadbe7;"></div><div style="left:276.5px;top:38.25px;width:1px;height:12.75px;background:#dadbe7;"></div><div style="left:314.5px;top:38.25px;width:1px;height:12.75px;background:#dadbe7;"></div><div style="left:352.7px;top:38.25px;width:1px;height:12.75px;background:#dadbe7;"></div><div style="left:390.7px;top:38.25px;width:1px;height:12.75px;background:#dadbe7;"></div><div style="left:428.8px;top:38.25px;width:1px;height:12.75px;background:#dadbe7;"></div><div style="left:467px;top:38.25px;width:1px;height:12.75px;background:#dadbe7;"></div><div class="t" style="left:-167.8px;width:200px;text-align:right;top:38.825px;color:#262a33;font-size:8.65px;">0.47</div><div class="t" style="left:-128px;width:200px;text-align:right;top:38.825px;color:#262a33;font-size:8.65px;">-0.08</div><div class="t" style="left:74.7px;width:200px;text-align:right;top:38.825px;color:#262a33;font-size:8.65px;">0.50</div><div class="t" style="left:112.8px;width:200px;text-align:right;top:38.825px;color:#262a33;font-size:8.65px;">0.49</div><div class="t" style="left:151.2px;width:200px;text-align:right;top:38.825px;color:#262a33;font-size:8.65px;">-0.09</div><div style="left:-2px;top:51px;width:237.8px;height:13.75px;background:#ffffff;border-top:1px solid #dadbe7;"></div><div style="left:238.4px;top:51px;width:268.6px;height:13.75px;background:#ffffff;border-top:1px solid #dadbe7;"></div><div style="left:34px;top:51px;width:1px;height:12.75px;background:#dadbe7;"></div><div style="left:73.3px;top:51px;width:1px;height:12.75px;background:#dadbe7;"></div><div style="left:112.8px;top:51px;width:1px;height:12.75px;background:#dadbe7;"></div><div style="left:152.5px;top:51px;width:1px;height:12.75px;background:#dadbe7;"></div><div style="left:192px;top:51px;width:1px;height:12.75px;background:#dadbe7;"></div><div style="left:276.5px;top:51px;width:1px;height:12.75px;background:#dadbe7;"></div><div style="left:314.5px;top:51px;width:1px;height:12.75px;background:#dadbe7;"></div><div style="left:352.7px;top:51px;width:1px;height:12.75px;background:#dadbe7;"></div><div style="left:390.7px;top:51px;width:1px;height:12.75px;background:#dadbe7;"></div><div style="left:428.8px;top:51px;width:1px;height:12.75px;background:#dadbe7;"></div><div style="left:467px;top:51px;width:1px;height:12.75px;background:#dadbe7;"></div><div class="t" style="left:-167.8px;width:200px;text-align:right;top:51.575px;color:#262a33;font-size:8.65px;">0.52</div><div class="t" style="left:-128px;width:200px;text-align:right;top:51.575px;color:#262a33;font-size:8.65px;">-0.09</div><div class="t" style="left:74.7px;width:200px;text-align:right;top:51.575px;color:#262a33;font-size:8.65px;">0.55</div><div class="t" style="left:112.8px;width:200px;text-align:right;top:51.575px;color:#262a33;font-size:8.65px;">0.54</div><div class="t" style="left:151.2px;width:200px;text-align:right;top:51.575px;color:#262a33;font-size:8.65px;">-0.09</div><div style="left:-2px;top:63.75px;width:237.8px;height:13.75px;background:#ffffff;border-top:1px solid #dadbe7;"></div><div style="left:238.4px;top:63.75px;width:268.6px;height:13.75px;background:#ffffff;border-top:1px solid #dadbe7;"></div><div style="left:34px;top:63.75px;width:1px;height:12.75px;background:#dadbe7;"></div><div style="left:73.3px;top:63.75px;width:1px;height:12.75px;background:#dadbe7;"></div><div style="left:112.8px;top:63.75px;width:1px;height:12.75px;background:#dadbe7;"></div><div style="left:152.5px;top:63.75px;width:1px;height:12.75px;background:#dadbe7;"></div><div style="left:192px;top:63.75px;width:1px;height:12.75px;background:#dadbe7;"></div><div style="left:276.5px;top:63.75px;width:1px;height:12.75px;background:#dadbe7;"></div><div style="left:314.5px;top:63.75px;width:1px;height:12.75px;background:#dadbe7;"></div><div style="left:352.7px;top:63.75px;width:1px;height:12.75px;background:#dadbe7;"></div><div style="left:390.7px;top:63.75px;width:1px;height:12.75px;background:#dadbe7;"></div><div style="left:428.8px;top:63.75px;width:1px;height:12.75px;background:#dadbe7;"></div><div style="left:467px;top:63.75px;width:1px;height:12.75px;background:#dadbe7;"></div><div class="t" style="left:-167.8px;width:200px;text-align:right;top:64.325px;color:#262a33;font-size:8.65px;">0.59</div><div class="t" style="left:-128px;width:200px;text-align:right;top:64.325px;color:#262a33;font-size:8.65px;">-0.10</div><div class="t" style="left:74.7px;width:200px;text-align:right;top:64.325px;color:#262a33;font-size:8.65px;">0.60</div><div class="t" style="left:112.8px;width:200px;text-align:right;top:64.325px;color:#262a33;font-size:8.65px;">0.59</div><div class="t" style="left:151.2px;width:200px;text-align:right;top:64.325px;color:#262a33;font-size:8.65px;">-0.10</div><div style="left:-2px;top:76.5px;width:237.8px;height:13.75px;background:#ffffff;border-top:1px solid #dadbe7;"></div><div style="left:238.4px;top:76.5px;width:268.6px;height:13.75px;background:#ffffff;border-top:1px solid #dadbe7;"></div><div style="left:34px;top:76.5px;width:1px;height:12.75px;background:#dadbe7;"></div><div style="left:73.3px;top:76.5px;width:1px;height:12.75px;background:#dadbe7;"></div><div style="left:112.8px;top:76.5px;width:1px;height:12.75px;background:#dadbe7;"></div><div style="left:152.5px;top:76.5px;width:1px;height:12.75px;background:#dadbe7;"></div><div style="left:192px;top:76.5px;width:1px;height:12.75px;background:#dadbe7;"></div><div style="left:276.5px;top:76.5px;width:1px;height:12.75px;background:#dadbe7;"></div><div style="left:314.5px;top:76.5px;width:1px;height:12.75px;background:#dadbe7;"></div><div style="left:352.7px;top:76.5px;width:1px;height:12.75px;background:#dadbe7;"></div><div style="left:390.7px;top:76.5px;width:1px;height:12.75px;background:#dadbe7;"></div><div style="left:428.8px;top:76.5px;width:1px;height:12.75px;background:#dadbe7;"></div><div style="left:467px;top:76.5px;width:1px;height:12.75px;background:#dadbe7;"></div><div class="t" style="left:-167.8px;width:200px;text-align:right;top:77.075px;color:#262a33;font-size:8.65px;">0.67</div><div class="t" style="left:-128px;width:200px;text-align:right;top:77.075px;color:#262a33;font-size:8.65px;">-0.11</div><div class="t" style="left:74.7px;width:200px;text-align:right;top:77.075px;color:#262a33;font-size:8.65px;">0.675</div><div class="t" style="left:112.8px;width:200px;text-align:right;top:77.075px;color:#262a33;font-size:8.65px;">0.67</div><div class="t" style="left:151.2px;width:200px;text-align:right;top:77.075px;color:#262a33;font-size:8.65px;">-0.11</div><div style="left:-2px;top:89.25px;width:237.8px;height:13.75px;background:#ffffff;border-top:1px solid #dadbe7;"></div><div style="left:238.4px;top:89.25px;width:268.6px;height:13.75px;background:#ffffff;border-top:1px solid #dadbe7;"></div><div style="left:34px;top:89.25px;width:1px;height:12.75px;background:#dadbe7;"></div><div style="left:73.3px;top:89.25px;width:1px;height:12.75px;background:#dadbe7;"></div><div style="left:112.8px;top:89.25px;width:1px;height:12.75px;background:#dadbe7;"></div><div style="left:152.5px;top:89.25px;width:1px;height:12.75px;background:#dadbe7;"></div><div style="left:192px;top:89.25px;width:1px;height:12.75px;background:#dadbe7;"></div><div style="left:276.5px;top:89.25px;width:1px;height:12.75px;background:#dadbe7;"></div><div style="left:314.5px;top:89.25px;width:1px;height:12.75px;background:#dadbe7;"></div><div style="left:352.7px;top:89.25px;width:1px;height:12.75px;background:#dadbe7;"></div><div style="left:390.7px;top:89.25px;width:1px;height:12.75px;background:#dadbe7;"></div><div style="left:428.8px;top:89.25px;width:1px;height:12.75px;background:#dadbe7;"></div><div style="left:467px;top:89.25px;width:1px;height:12.75px;background:#dadbe7;"></div><div class="t" style="left:-167.8px;width:200px;text-align:right;top:89.825px;color:#262a33;font-size:8.65px;">0.72</div><div class="t" style="left:-128px;width:200px;text-align:right;top:89.825px;color:#262a33;font-size:8.65px;">-0.12</div><div class="t" style="left:74.7px;width:200px;text-align:right;top:89.825px;color:#262a33;font-size:8.65px;">0.75</div><div class="t" style="left:112.8px;width:200px;text-align:right;top:89.825px;color:#262a33;font-size:8.65px;">0.74</div><div class="t" style="left:151.2px;width:200px;text-align:right;top:89.825px;color:#262a33;font-size:8.65px;">-0.12</div><div style="left:-2px;top:102px;width:237.8px;height:13.75px;background:#c6e5eb;border-top:1px solid #bbdae1;"></div><div style="left:238.4px;top:102px;width:268.6px;height:13.75px;background:#c6e5eb;border-top:1px solid #bbdae1;"></div><div style="left:34px;top:102px;width:1px;height:12.75px;background:#bbdae1;"></div><div style="left:73.3px;top:102px;width:1px;height:12.75px;background:#bbdae1;"></div><div style="left:112.8px;top:102px;width:1px;height:12.75px;background:#bbdae1;"></div><div style="left:152.5px;top:102px;width:1px;height:12.75px;background:#bbdae1;"></div><div style="left:192px;top:102px;width:1px;height:12.75px;background:#bbdae1;"></div><div style="left:276.5px;top:102px;width:1px;height:12.75px;background:#bbdae1;"></div><div style="left:314.5px;top:102px;width:1px;height:12.75px;background:#bbdae1;"></div><div style="left:352.7px;top:102px;width:1px;height:12.75px;background:#bbdae1;"></div><div style="left:390.7px;top:102px;width:1px;height:12.75px;background:#bbdae1;"></div><div style="left:428.8px;top:102px;width:1px;height:12.75px;background:#bbdae1;"></div><div style="left:467px;top:102px;width:1px;height:12.75px;background:#bbdae1;"></div><div class="t" style="left:-167.8px;width:200px;text-align:right;top:102.575px;color:#262a33;font-size:8.65px;">0.80</div><div class="t" style="left:-128px;width:200px;text-align:right;top:102.575px;color:#262a33;font-size:8.65px;">-0.13</div><div class="t" style="left:74.7px;width:200px;text-align:right;top:102.575px;color:#262a33;font-size:8.65px;">0.825</div><div class="t" style="left:112.8px;width:200px;text-align:right;top:102.575px;color:#262a33;font-size:8.65px;">0.82</div><div class="t" style="left:151.2px;width:200px;text-align:right;top:102.575px;color:#262a33;font-size:8.65px;">-0.13</div><div style="left:-2px;top:114.75px;width:237.8px;height:13.75px;background:#c6e5eb;border-top:1px solid #bbdae1;"></div><div style="left:238.4px;top:114.75px;width:268.6px;height:13.75px;background:#c6e5eb;border-top:1px solid #bbdae1;"></div><div style="left:34px;top:114.75px;width:1px;height:12.75px;background:#bbdae1;"></div><div style="left:73.3px;top:114.75px;width:1px;height:12.75px;background:#bbdae1;"></div><div style="left:112.8px;top:114.75px;width:1px;height:12.75px;background:#bbdae1;"></div><div style="left:152.5px;top:114.75px;width:1px;height:12.75px;background:#bbdae1;"></div><div style="left:192px;top:114.75px;width:1px;height:12.75px;background:#bbdae1;"></div><div style="left:276.5px;top:114.75px;width:1px;height:12.75px;background:#bbdae1;"></div><div style="left:314.5px;top:114.75px;width:1px;height:12.75px;background:#bbdae1;"></div><div style="left:352.7px;top:114.75px;width:1px;height:12.75px;background:#bbdae1;"></div><div style="left:390.7px;top:114.75px;width:1px;height:12.75px;background:#bbdae1;"></div><div style="left:428.8px;top:114.75px;width:1px;height:12.75px;background:#bbdae1;"></div><div style="left:467px;top:114.75px;width:1px;height:12.75px;background:#bbdae1;"></div><div class="t" style="left:-167.8px;width:200px;text-align:right;top:115.325px;color:#262a33;font-size:8.65px;">0.88</div><div class="t" style="left:-128px;width:200px;text-align:right;top:115.325px;color:#262a33;font-size:8.65px;">-0.14</div><div class="t" style="left:74.7px;width:200px;text-align:right;top:115.325px;color:#262a33;font-size:8.65px;">0.90</div><div class="t" style="left:112.8px;width:200px;text-align:right;top:115.325px;color:#262a33;font-size:8.65px;">0.90</div><div class="t" style="left:151.2px;width:200px;text-align:right;top:115.325px;color:#262a33;font-size:8.65px;">-0.14</div></div><div style="left:234.8px;top:196.5px;width:1px;height:122.1px;background:#bfc6d8;"></div><div style="left:238.4px;top:196.5px;width:1px;height:122.1px;background:#bfc6d8;"></div><div style="left:-2px;top:317.6px;width:237.8px;height:1px;background:#bfc6d8;"></div><div style="left:238.4px;top:317.6px;width:281.4px;height:1px;background:#bfc6d8;"></div>
<div style="left:507px;top:196.5px;width:12.8px;height:122.1px;background:#cfd5e5;border-left:1px solid #c3cadb;border-right:1px solid #bcc3d5;"></div><svg style="position:absolute;left:510.6px;top:201.5px" width="6" height="4" viewBox="0 0 6 4"><path d="M3 0.4L5.6 3.6H0.4Z" fill="#5a6880"/></svg><svg style="position:absolute;left:510.6px;top:311.2px" width="6" height="4" viewBox="0 0 6 4"><path d="M3 3.6L5.6 0.4H0.4Z" fill="#5a6880"/></svg><div style="left:511px;top:223.8px;width:5.2px;height:12.4px;background:#8f98b0;"></div>
<div style="left:-2px;top:326.8px;width:237.8px;height:14px;background:linear-gradient(#f7f8fc,#eff1f8);border:1px solid #d0d4e2;"></div><div style="left:238.4px;top:326.8px;width:281.4px;height:14px;background:linear-gradient(#f7f8fc,#eff1f8);border:1px solid #d0d4e2;"></div><div style="left:34px;top:326.8px;width:1px;height:14px;background:#d0d4e2;"></div><div style="left:73.3px;top:326.8px;width:1px;height:14px;background:#d0d4e2;"></div><div style="left:112.8px;top:326.8px;width:1px;height:14px;background:#d0d4e2;"></div><div style="left:152.5px;top:326.8px;width:1px;height:14px;background:#d0d4e2;"></div><div style="left:192px;top:326.8px;width:1px;height:14px;background:#d0d4e2;"></div><div style="left:276.5px;top:326.8px;width:1px;height:14px;background:#d0d4e2;"></div><div style="left:314.5px;top:326.8px;width:1px;height:14px;background:#d0d4e2;"></div><div style="left:352.7px;top:326.8px;width:1px;height:14px;background:#d0d4e2;"></div><div style="left:390.7px;top:326.8px;width:1px;height:14px;background:#d0d4e2;"></div><div style="left:428.8px;top:326.8px;width:1px;height:14px;background:#d0d4e2;"></div><div style="left:467px;top:326.8px;width:1px;height:14px;background:#d0d4e2;"></div><div style="left:506.5px;top:326.8px;width:1px;height:14px;background:#d0d4e2;"></div><div class="t" style="left:-85.05px;width:200px;text-align:center;top:328.1px;color:#3c404a;font-size:8.3px;letter-spacing:-0.1px;">Delta</div><div class="t" style="left:-45.05px;width:200px;text-align:center;top:328.1px;color:#3c404a;font-size:8.3px;letter-spacing:-0.1px;">Theta</div><div class="t" style="left:-6.45px;width:200px;text-align:center;top:328.1px;color:#3c404a;font-size:8.3px;letter-spacing:-0.1px;">OrigPrice</div><div class="t" style="left:33.45px;width:200px;text-align:center;top:328.1px;color:#3c404a;font-size:8.3px;letter-spacing:-0.1px;">IVChg</div><div class="t" style="left:72.95px;width:200px;text-align:center;top:328.1px;color:#3c404a;font-size:8.3px;letter-spacing:-0.1px;">Model</div><div class="t" style="left:114.75px;width:200px;text-align:center;top:328.1px;color:#3c404a;font-size:8.3px;letter-spacing:-0.1px;">Pos</div><div class="t" style="left:157.45px;width:200px;text-align:center;top:328.1px;color:#3c404a;font-size:8.3px;letter-spacing:-0.1px;">Mid</div><div class="t" style="left:195.65px;width:200px;text-align:center;top:328.1px;color:#3c404a;font-size:8.3px;letter-spacing:-0.1px;">Delta</div><div class="t" style="left:233.95px;width:200px;text-align:center;top:328.1px;color:#3c404a;font-size:8.3px;letter-spacing:-0.1px;">Theta</div><div class="t" style="left:271.95px;width:200px;text-align:center;top:328.1px;color:#3c404a;font-size:8.3px;letter-spacing:-0.1px;">OrigPrice</div><div class="t" style="left:309.95px;width:200px;text-align:center;top:328.1px;color:#3c404a;font-size:8.3px;letter-spacing:-0.1px;">IVChg</div><div class="t" style="left:348.45px;width:200px;text-align:center;top:328.1px;color:#3c404a;font-size:8.3px;letter-spacing:-0.1px;">Model</div><div class="t" style="left:387.45px;width:200px;text-align:center;top:328.1px;color:#3c404a;font-size:8.3px;letter-spacing:-0.1px;">Pos</div>
<div style="left:0px;top:340.5px;width:519.8px;height:264.5px;overflow:hidden;"><div style="left:-2px;top:0px;width:237.8px;height:13.75px;background:#a9c1e1;border-top:1px solid #a9c1e1;"></div><div style="left:238.4px;top:0px;width:268.6px;height:13.75px;background:#a9c1e1;border-top:1px solid #a9c1e1;"></div><div style="left:34px;top:0px;width:1px;height:12.75px;background:#bbcde8;"></div><div style="left:73.3px;top:0px;width:1px;height:12.75px;background:#bbcde8;"></div><div style="left:112.8px;top:0px;width:1px;height:12.75px;background:#bbcde8;"></div><div style="left:152.5px;top:0px;width:1px;height:12.75px;background:#bbcde8;"></div><div style="left:192px;top:0px;width:1px;height:12.75px;background:#bbcde8;"></div><div style="left:276.5px;top:0px;width:1px;height:12.75px;background:#bbcde8;"></div><div style="left:314.5px;top:0px;width:1px;height:12.75px;background:#bbcde8;"></div><div style="left:352.7px;top:0px;width:1px;height:12.75px;background:#bbcde8;"></div><div style="left:390.7px;top:0px;width:1px;height:12.75px;background:#bbcde8;"></div><div style="left:428.8px;top:0px;width:1px;height:12.75px;background:#bbcde8;"></div><div style="left:467px;top:0px;width:1px;height:12.75px;background:#bbcde8;"></div><div class="t" style="left:-167.8px;width:200px;text-align:right;top:0.575px;color:#262a33;font-size:8.65px;">-47.65</div><div class="t" style="left:-128px;width:200px;text-align:right;top:0.575px;color:#262a33;font-size:8.65px;">-2.27</div><div class="t" style="left:-88.5px;width:200px;text-align:right;top:0.575px;color:#262a33;font-size:8.65px;">52.95</div><div class="t" style="left:-49.2px;width:200px;text-align:right;top:0.575px;color:#262a33;font-size:8.65px;">2.40</div><div class="t" style="left:33.9px;width:200px;text-align:right;top:0.575px;color:#262a33;font-size:8.65px;">+2</div><div class="t" style="left:74.7px;width:200px;text-align:right;top:0.575px;color:#e0303a;font-size:8.65px;">146.20</div><div class="t" style="left:112.8px;width:200px;text-align:right;top:0.575px;color:#262a33;font-size:8.65px;">-47.65</div><div class="t" style="left:151.2px;width:200px;text-align:right;top:0.575px;color:#262a33;font-size:8.65px;">-2.31</div><div style="left:-2px;top:12.75px;width:237.8px;height:13.75px;background:#a9c1e1;border-top:1px solid #bbcde8;"></div><div style="left:238.4px;top:12.75px;width:268.6px;height:13.75px;background:#a9c1e1;border-top:1px solid #bbcde8;"></div><div style="left:34px;top:12.75px;width:1px;height:12.75px;background:#bbcde8;"></div><div style="left:73.3px;top:12.75px;width:1px;height:12.75px;background:#bbcde8;"></div><div style="left:112.8px;top:12.75px;width:1px;height:12.75px;background:#bbcde8;"></div><div style="left:152.5px;top:12.75px;width:1px;height:12.75px;background:#bbcde8;"></div><div style="left:192px;top:12.75px;width:1px;height:12.75px;background:#bbcde8;"></div><div style="left:276.5px;top:12.75px;width:1px;height:12.75px;background:#bbcde8;"></div><div style="left:314.5px;top:12.75px;width:1px;height:12.75px;background:#bbcde8;"></div><div style="left:352.7px;top:12.75px;width:1px;height:12.75px;background:#bbcde8;"></div><div style="left:390.7px;top:12.75px;width:1px;height:12.75px;background:#bbcde8;"></div><div style="left:428.8px;top:12.75px;width:1px;height:12.75px;background:#bbcde8;"></div><div style="left:467px;top:12.75px;width:1px;height:12.75px;background:#bbcde8;"></div><div class="t" style="left:-167.8px;width:200px;text-align:right;top:13.325px;color:#262a33;font-size:8.65px;">-45.07</div><div class="t" style="left:-128px;width:200px;text-align:right;top:13.325px;color:#262a33;font-size:8.65px;">-2.34</div><div class="t" style="left:74.7px;width:200px;text-align:right;top:13.325px;color:#e0303a;font-size:8.65px;">137.50</div><div class="t" style="left:112.8px;width:200px;text-align:right;top:13.325px;color:#262a33;font-size:8.65px;">-45.10</div><div class="t" style="left:151.2px;width:200px;text-align:right;top:13.325px;color:#262a33;font-size:8.65px;">-2.38</div><div style="left:-2px;top:25.5px;width:237.8px;height:13.75px;background:#a9c1e1;border-top:1px solid #bbcde8;"></div><div style="left:238.4px;top:25.5px;width:268.6px;height:13.75px;background:#a9c1e1;border-top:1px solid #bbcde8;"></div><div style="left:34px;top:25.5px;width:1px;height:12.75px;background:#bbcde8;"></div><div style="left:73.3px;top:25.5px;width:1px;height:12.75px;background:#bbcde8;"></div><div style="left:112.8px;top:25.5px;width:1px;height:12.75px;background:#bbcde8;"></div><div style="left:152.5px;top:25.5px;width:1px;height:12.75px;background:#bbcde8;"></div><div style="left:192px;top:25.5px;width:1px;height:12.75px;background:#bbcde8;"></div><div style="left:276.5px;top:25.5px;width:1px;height:12.75px;background:#bbcde8;"></div><div style="left:314.5px;top:25.5px;width:1px;height:12.75px;background:#bbcde8;"></div><div style="left:352.7px;top:25.5px;width:1px;height:12.75px;background:#bbcde8;"></div><div style="left:390.7px;top:25.5px;width:1px;height:12.75px;background:#bbcde8;"></div><div style="left:428.8px;top:25.5px;width:1px;height:12.75px;background:#bbcde8;"></div><div style="left:467px;top:25.5px;width:1px;height:12.75px;background:#bbcde8;"></div><div class="t" style="left:-167.8px;width:200px;text-align:right;top:26.075px;color:#262a33;font-size:8.65px;">-42.60</div><div class="t" style="left:-128px;width:200px;text-align:right;top:26.075px;color:#262a33;font-size:8.65px;">-2.39</div><div class="t" style="left:74.7px;width:200px;text-align:right;top:26.075px;color:#e0303a;font-size:8.65px;">129.30</div><div class="t" style="left:112.8px;width:200px;text-align:right;top:26.075px;color:#262a33;font-size:8.65px;">-42.67</div><div class="t" style="left:151.2px;width:200px;text-align:right;top:26.075px;color:#262a33;font-size:8.65px;">-2.43</div><div style="left:-2px;top:38.25px;width:237.8px;height:13.75px;background:#a9c1e1;border-top:1px solid #bbcde8;"></div><div style="left:238.4px;top:38.25px;width:268.6px;height:13.75px;background:#a9c1e1;border-top:1px solid #bbcde8;"></div><div style="left:34px;top:38.25px;width:1px;height:12.75px;background:#bbcde8;"></div><div style="left:73.3px;top:38.25px;width:1px;height:12.75px;background:#bbcde8;"></div><div style="left:112.8px;top:38.25px;width:1px;height:12.75px;background:#bbcde8;"></div><div style="left:152.5px;top:38.25px;width:1px;height:12.75px;background:#bbcde8;"></div><div style="left:192px;top:38.25px;width:1px;height:12.75px;background:#bbcde8;"></div><div style="left:276.5px;top:38.25px;width:1px;height:12.75px;background:#bbcde8;"></div><div style="left:314.5px;top:38.25px;width:1px;height:12.75px;background:#bbcde8;"></div><div style="left:352.7px;top:38.25px;width:1px;height:12.75px;background:#bbcde8;"></div><div style="left:390.7px;top:38.25px;width:1px;height:12.75px;background:#bbcde8;"></div><div style="left:428.8px;top:38.25px;width:1px;height:12.75px;background:#bbcde8;"></div><div style="left:467px;top:38.25px;width:1px;height:12.75px;background:#bbcde8;"></div><div class="t" style="left:-167.8px;width:200px;text-align:right;top:38.825px;color:#262a33;font-size:8.65px;">-40.26</div><div class="t" style="left:-128px;width:200px;text-align:right;top:38.825px;color:#262a33;font-size:8.65px;">-2.43</div><div class="t" style="left:-88.5px;width:200px;text-align:right;top:38.825px;color:#262a33;font-size:8.65px;">42.80</div><div class="t" style="left:-49.2px;width:200px;text-align:right;top:38.825px;color:#262a33;font-size:8.65px;">2.81</div><div class="t" style="left:-10.5px;width:200px;text-align:right;top:38.825px;color:#262a33;font-size:8.65px;">+1</div><div class="t" style="left:33.9px;width:200px;text-align:right;top:38.825px;color:#262a33;font-size:8.65px;">-2</div><div class="t" style="left:74.7px;width:200px;text-align:right;top:38.825px;color:#e0303a;font-size:8.65px;">121.70</div><div class="t" style="left:112.8px;width:200px;text-align:right;top:38.825px;color:#262a33;font-size:8.65px;">-40.35</div><div class="t" style="left:151.2px;width:200px;text-align:right;top:38.825px;color:#262a33;font-size:8.65px;">-2.47</div><div style="left:-2px;top:51px;width:237.8px;height:13.75px;background:#a9c1e1;border-top:1px solid #bbcde8;"></div><div style="left:238.4px;top:51px;width:268.6px;height:13.75px;background:#a9c1e1;border-top:1px solid #bbcde8;"></div><div style="left:34px;top:51px;width:1px;height:12.75px;background:#bbcde8;"></div><div style="left:73.3px;top:51px;width:1px;height:12.75px;background:#bbcde8;"></div><div style="left:112.8px;top:51px;width:1px;height:12.75px;background:#bbcde8;"></div><div style="left:152.5px;top:51px;width:1px;height:12.75px;background:#bbcde8;"></div><div style="left:192px;top:51px;width:1px;height:12.75px;background:#bbcde8;"></div><div style="left:276.5px;top:51px;width:1px;height:12.75px;background:#bbcde8;"></div><div style="left:314.5px;top:51px;width:1px;height:12.75px;background:#bbcde8;"></div><div style="left:352.7px;top:51px;width:1px;height:12.75px;background:#bbcde8;"></div><div style="left:390.7px;top:51px;width:1px;height:12.75px;background:#bbcde8;"></div><div style="left:428.8px;top:51px;width:1px;height:12.75px;background:#bbcde8;"></div><div style="left:467px;top:51px;width:1px;height:12.75px;background:#bbcde8;"></div><div class="t" style="left:-167.8px;width:200px;text-align:right;top:51.575px;color:#262a33;font-size:8.65px;">-38.03</div><div class="t" style="left:-128px;width:200px;text-align:right;top:51.575px;color:#262a33;font-size:8.65px;">-2.46</div><div class="t" style="left:-88.5px;width:200px;text-align:right;top:51.575px;color:#262a33;font-size:8.65px;">72.18</div><div class="t" style="left:-49.2px;width:200px;text-align:right;top:51.575px;color:#262a33;font-size:8.65px;">-0.73</div><div class="t" style="left:-10.5px;width:200px;text-align:right;top:51.575px;color:#262a33;font-size:8.65px;">-1</div><div class="t" style="left:33.9px;width:200px;text-align:right;top:51.575px;color:#262a33;font-size:8.65px;">-2</div><div class="t" style="left:74.7px;width:200px;text-align:right;top:51.575px;color:#e0303a;font-size:8.65px;">114.40</div><div class="t" style="left:112.8px;width:200px;text-align:right;top:51.575px;color:#262a33;font-size:8.65px;">-38.14</div><div class="t" style="left:151.2px;width:200px;text-align:right;top:51.575px;color:#262a33;font-size:8.65px;">-2.50</div><div style="left:-2px;top:63.75px;width:237.8px;height:13.75px;background:#a9c1e1;border-top:1px solid #bbcde8;"></div><div style="left:238.4px;top:63.75px;width:268.6px;height:13.75px;background:#a9c1e1;border-top:1px solid #bbcde8;"></div><div style="left:34px;top:63.75px;width:1px;height:12.75px;background:#bbcde8;"></div><div style="left:73.3px;top:63.75px;width:1px;height:12.75px;background:#bbcde8;"></div><div style="left:112.8px;top:63.75px;width:1px;height:12.75px;background:#bbcde8;"></div><div style="left:152.5px;top:63.75px;width:1px;height:12.75px;background:#bbcde8;"></div><div style="left:192px;top:63.75px;width:1px;height:12.75px;background:#bbcde8;"></div><div style="left:276.5px;top:63.75px;width:1px;height:12.75px;background:#bbcde8;"></div><div style="left:314.5px;top:63.75px;width:1px;height:12.75px;background:#bbcde8;"></div><div style="left:352.7px;top:63.75px;width:1px;height:12.75px;background:#bbcde8;"></div><div style="left:390.7px;top:63.75px;width:1px;height:12.75px;background:#bbcde8;"></div><div style="left:428.8px;top:63.75px;width:1px;height:12.75px;background:#bbcde8;"></div><div style="left:467px;top:63.75px;width:1px;height:12.75px;background:#bbcde8;"></div><div class="t" style="left:-167.8px;width:200px;text-align:right;top:64.325px;color:#262a33;font-size:8.65px;">-35.91</div><div class="t" style="left:-128px;width:200px;text-align:right;top:64.325px;color:#262a33;font-size:8.65px;">-2.48</div><div class="t" style="left:74.7px;width:200px;text-align:right;top:64.325px;color:#e0303a;font-size:8.65px;">107.60</div><div class="t" style="left:112.8px;width:200px;text-align:right;top:64.325px;color:#262a33;font-size:8.65px;">-36.05</div><div class="t" style="left:151.2px;width:200px;text-align:right;top:64.325px;color:#262a33;font-size:8.65px;">-2.52</div><div style="left:-2px;top:76.5px;width:237.8px;height:13.75px;background:#fffcf0;border-top:1px solid #e4e2dc;"></div><div style="left:238.4px;top:76.5px;width:268.6px;height:13.75px;background:#fffcf0;border-top:1px solid #e4e2dc;"></div><div style="left:34px;top:76.5px;width:1px;height:12.75px;background:#e4e2dc;"></div><div style="left:73.3px;top:76.5px;width:1px;height:12.75px;background:#e4e2dc;"></div><div style="left:112.8px;top:76.5px;width:1px;height:12.75px;background:#e4e2dc;"></div><div style="left:152.5px;top:76.5px;width:1px;height:12.75px;background:#e4e2dc;"></div><div style="left:192px;top:76.5px;width:1px;height:12.75px;background:#e4e2dc;"></div><div style="left:276.5px;top:76.5px;width:1px;height:12.75px;background:#e4e2dc;"></div><div style="left:314.5px;top:76.5px;width:1px;height:12.75px;background:#e4e2dc;"></div><div style="left:352.7px;top:76.5px;width:1px;height:12.75px;background:#e4e2dc;"></div><div style="left:390.7px;top:76.5px;width:1px;height:12.75px;background:#e4e2dc;"></div><div style="left:428.8px;top:76.5px;width:1px;height:12.75px;background:#e4e2dc;"></div><div style="left:467px;top:76.5px;width:1px;height:12.75px;background:#e4e2dc;"></div><div class="t" style="left:-167.8px;width:200px;text-align:right;top:77.075px;color:#262a33;font-size:8.65px;">-33.88</div><div class="t" style="left:-128px;width:200px;text-align:right;top:77.075px;color:#262a33;font-size:8.65px;">-2.49</div><div style="left:154.4px;top:77.5px;width:35.8px;height:10.55px;background:#fdeeb0;"></div><div style="left:188.9px;top:78.1px;width:0.9px;height:9.15px;background:#222;"></div><div class="t" style="left:74.7px;width:200px;text-align:right;top:77.075px;color:#e0303a;font-size:8.65px;">101.30</div><div class="t" style="left:112.8px;width:200px;text-align:right;top:77.075px;color:#262a33;font-size:8.65px;">-34.06</div><div class="t" style="left:151.2px;width:200px;text-align:right;top:77.075px;color:#262a33;font-size:8.65px;">-2.54</div><div style="left:-2px;top:89.25px;width:237.8px;height:13.75px;background:#a9c1e1;border-top:1px solid #bbcde8;"></div><div style="left:238.4px;top:89.25px;width:268.6px;height:13.75px;background:#a9c1e1;border-top:1px solid #bbcde8;"></div><div style="left:34px;top:89.25px;width:1px;height:12.75px;background:#bbcde8;"></div><div style="left:73.3px;top:89.25px;width:1px;height:12.75px;background:#bbcde8;"></div><div style="left:112.8px;top:89.25px;width:1px;height:12.75px;background:#bbcde8;"></div><div style="left:152.5px;top:89.25px;width:1px;height:12.75px;background:#bbcde8;"></div><div style="left:192px;top:89.25px;width:1px;height:12.75px;background:#bbcde8;"></div><div style="left:276.5px;top:89.25px;width:1px;height:12.75px;background:#bbcde8;"></div><div style="left:314.5px;top:89.25px;width:1px;height:12.75px;background:#bbcde8;"></div><div style="left:352.7px;top:89.25px;width:1px;height:12.75px;background:#bbcde8;"></div><div style="left:390.7px;top:89.25px;width:1px;height:12.75px;background:#bbcde8;"></div><div style="left:428.8px;top:89.25px;width:1px;height:12.75px;background:#bbcde8;"></div><div style="left:467px;top:89.25px;width:1px;height:12.75px;background:#bbcde8;"></div><div class="t" style="left:-167.8px;width:200px;text-align:right;top:89.825px;color:#262a33;font-size:8.65px;">-31.98</div><div class="t" style="left:-128px;width:200px;text-align:right;top:89.825px;color:#262a33;font-size:8.65px;">-2.50</div><div class="t" style="left:74.7px;width:200px;text-align:right;top:89.825px;color:#e0303a;font-size:8.65px;">95.35</div><div class="t" style="left:112.8px;width:200px;text-align:right;top:89.825px;color:#262a33;font-size:8.65px;">-32.17</div><div class="t" style="left:151.2px;width:200px;text-align:right;top:89.825px;color:#262a33;font-size:8.65px;">-2.54</div><div style="left:-2px;top:102px;width:237.8px;height:13.75px;background:#a9c1e1;border-top:1px solid #bbcde8;"></div><div style="left:238.4px;top:102px;width:268.6px;height:13.75px;background:#a9c1e1;border-top:1px solid #bbcde8;"></div><div style="left:34px;top:102px;width:1px;height:12.75px;background:#bbcde8;"></div><div style="left:73.3px;top:102px;width:1px;height:12.75px;background:#bbcde8;"></div><div style="left:112.8px;top:102px;width:1px;height:12.75px;background:#bbcde8;"></div><div style="left:152.5px;top:102px;width:1px;height:12.75px;background:#bbcde8;"></div><div style="left:192px;top:102px;width:1px;height:12.75px;background:#bbcde8;"></div><div style="left:276.5px;top:102px;width:1px;height:12.75px;background:#bbcde8;"></div><div style="left:314.5px;top:102px;width:1px;height:12.75px;background:#bbcde8;"></div><div style="left:352.7px;top:102px;width:1px;height:12.75px;background:#bbcde8;"></div><div style="left:390.7px;top:102px;width:1px;height:12.75px;background:#bbcde8;"></div><div style="left:428.8px;top:102px;width:1px;height:12.75px;background:#bbcde8;"></div><div style="left:467px;top:102px;width:1px;height:12.75px;background:#bbcde8;"></div><div class="t" style="left:-167.8px;width:200px;text-align:right;top:102.575px;color:#262a33;font-size:8.65px;">-30.18</div><div class="t" style="left:-128px;width:200px;text-align:right;top:102.575px;color:#262a33;font-size:8.65px;">-2.49</div><div class="t" style="left:74.7px;width:200px;text-align:right;top:102.575px;color:#e0303a;font-size:8.65px;">89.75</div><div class="t" style="left:112.8px;width:200px;text-align:right;top:102.575px;color:#262a33;font-size:8.65px;">-30.38</div><div class="t" style="left:151.2px;width:200px;text-align:right;top:102.575px;color:#262a33;font-size:8.65px;">-2.54</div><div style="left:-2px;top:114.75px;width:237.8px;height:13.75px;background:#a9c1e1;border-top:1px solid #bbcde8;"></div><div style="left:238.4px;top:114.75px;width:268.6px;height:13.75px;background:#a9c1e1;border-top:1px solid #bbcde8;"></div><div style="left:34px;top:114.75px;width:1px;height:12.75px;background:#bbcde8;"></div><div style="left:73.3px;top:114.75px;width:1px;height:12.75px;background:#bbcde8;"></div><div style="left:112.8px;top:114.75px;width:1px;height:12.75px;background:#bbcde8;"></div><div style="left:152.5px;top:114.75px;width:1px;height:12.75px;background:#bbcde8;"></div><div style="left:192px;top:114.75px;width:1px;height:12.75px;background:#bbcde8;"></div><div style="left:276.5px;top:114.75px;width:1px;height:12.75px;background:#bbcde8;"></div><div style="left:314.5px;top:114.75px;width:1px;height:12.75px;background:#bbcde8;"></div><div style="left:352.7px;top:114.75px;width:1px;height:12.75px;background:#bbcde8;"></div><div style="left:390.7px;top:114.75px;width:1px;height:12.75px;background:#bbcde8;"></div><div style="left:428.8px;top:114.75px;width:1px;height:12.75px;background:#bbcde8;"></div><div style="left:467px;top:114.75px;width:1px;height:12.75px;background:#bbcde8;"></div><div class="t" style="left:-167.8px;width:200px;text-align:right;top:115.325px;color:#262a33;font-size:8.65px;">-28.47</div><div class="t" style="left:-128px;width:200px;text-align:right;top:115.325px;color:#262a33;font-size:8.65px;">-2.48</div><div class="t" style="left:74.7px;width:200px;text-align:right;top:115.325px;color:#e0303a;font-size:8.65px;">84.45</div><div class="t" style="left:112.8px;width:200px;text-align:right;top:115.325px;color:#262a33;font-size:8.65px;">-28.68</div><div class="t" style="left:151.2px;width:200px;text-align:right;top:115.325px;color:#262a33;font-size:8.65px;">-2.52</div><div style="left:-2px;top:127.5px;width:237.8px;height:13.75px;background:#a9c1e1;border-top:1px solid #bbcde8;"></div><div style="left:238.4px;top:127.5px;width:268.6px;height:13.75px;background:#a9c1e1;border-top:1px solid #bbcde8;"></div><div style="left:34px;top:127.5px;width:1px;height:12.75px;background:#bbcde8;"></div><div style="left:73.3px;top:127.5px;width:1px;height:12.75px;background:#bbcde8;"></div><div style="left:112.8px;top:127.5px;width:1px;height:12.75px;background:#bbcde8;"></div><div style="left:152.5px;top:127.5px;width:1px;height:12.75px;background:#bbcde8;"></div><div style="left:192px;top:127.5px;width:1px;height:12.75px;background:#bbcde8;"></div><div style="left:276.5px;top:127.5px;width:1px;height:12.75px;background:#bbcde8;"></div><div style="left:314.5px;top:127.5px;width:1px;height:12.75px;background:#bbcde8;"></div><div style="left:352.7px;top:127.5px;width:1px;height:12.75px;background:#bbcde8;"></div><div style="left:390.7px;top:127.5px;width:1px;height:12.75px;background:#bbcde8;"></div><div style="left:428.8px;top:127.5px;width:1px;height:12.75px;background:#bbcde8;"></div><div style="left:467px;top:127.5px;width:1px;height:12.75px;background:#bbcde8;"></div><div class="t" style="left:-167.8px;width:200px;text-align:right;top:128.075px;color:#262a33;font-size:8.65px;">-26.85</div><div class="t" style="left:-128px;width:200px;text-align:right;top:128.075px;color:#262a33;font-size:8.65px;">-2.46</div><div class="t" style="left:-88.5px;width:200px;text-align:right;top:128.075px;color:#262a33;font-size:8.65px;">26.95</div><div class="t" style="left:-49.2px;width:200px;text-align:right;top:128.075px;color:#262a33;font-size:8.65px;">3.47</div><div class="t" style="left:33.9px;width:200px;text-align:right;top:128.075px;color:#262a33;font-size:8.65px;">+2</div><div class="t" style="left:74.7px;width:200px;text-align:right;top:128.075px;color:#e0303a;font-size:8.65px;">79.50</div><div class="t" style="left:112.8px;width:200px;text-align:right;top:128.075px;color:#262a33;font-size:8.65px;">-27.08</div><div class="t" style="left:151.2px;width:200px;text-align:right;top:128.075px;color:#262a33;font-size:8.65px;">-2.51</div><div style="left:-2px;top:140.25px;width:237.8px;height:13.75px;background:#a9c1e1;border-top:1px solid #bbcde8;"></div><div style="left:238.4px;top:140.25px;width:268.6px;height:13.75px;background:#a9c1e1;border-top:1px solid #bbcde8;"></div><div style="left:34px;top:140.25px;width:1px;height:12.75px;background:#bbcde8;"></div><div style="left:73.3px;top:140.25px;width:1px;height:12.75px;background:#bbcde8;"></div><div style="left:112.8px;top:140.25px;width:1px;height:12.75px;background:#bbcde8;"></div><div style="left:152.5px;top:140.25px;width:1px;height:12.75px;background:#bbcde8;"></div><div style="left:192px;top:140.25px;width:1px;height:12.75px;background:#bbcde8;"></div><div style="left:276.5px;top:140.25px;width:1px;height:12.75px;background:#bbcde8;"></div><div style="left:314.5px;top:140.25px;width:1px;height:12.75px;background:#bbcde8;"></div><div style="left:352.7px;top:140.25px;width:1px;height:12.75px;background:#bbcde8;"></div><div style="left:390.7px;top:140.25px;width:1px;height:12.75px;background:#bbcde8;"></div><div style="left:428.8px;top:140.25px;width:1px;height:12.75px;background:#bbcde8;"></div><div style="left:467px;top:140.25px;width:1px;height:12.75px;background:#bbcde8;"></div><div class="t" style="left:-167.8px;width:200px;text-align:right;top:140.825px;color:#262a33;font-size:8.65px;">-25.33</div><div class="t" style="left:-128px;width:200px;text-align:right;top:140.825px;color:#262a33;font-size:8.65px;">-2.44</div><div class="t" style="left:74.7px;width:200px;text-align:right;top:140.825px;color:#e0303a;font-size:8.65px;">74.85</div><div class="t" style="left:112.8px;width:200px;text-align:right;top:140.825px;color:#262a33;font-size:8.65px;">-25.56</div><div class="t" style="left:151.2px;width:200px;text-align:right;top:140.825px;color:#262a33;font-size:8.65px;">-2.48</div><div style="left:-2px;top:153px;width:237.8px;height:13.75px;background:#a9c1e1;border-top:1px solid #bbcde8;"></div><div style="left:238.4px;top:153px;width:268.6px;height:13.75px;background:#a9c1e1;border-top:1px solid #bbcde8;"></div><div style="left:34px;top:153px;width:1px;height:12.75px;background:#bbcde8;"></div><div style="left:73.3px;top:153px;width:1px;height:12.75px;background:#bbcde8;"></div><div style="left:112.8px;top:153px;width:1px;height:12.75px;background:#bbcde8;"></div><div style="left:152.5px;top:153px;width:1px;height:12.75px;background:#bbcde8;"></div><div style="left:192px;top:153px;width:1px;height:12.75px;background:#bbcde8;"></div><div style="left:276.5px;top:153px;width:1px;height:12.75px;background:#bbcde8;"></div><div style="left:314.5px;top:153px;width:1px;height:12.75px;background:#bbcde8;"></div><div style="left:352.7px;top:153px;width:1px;height:12.75px;background:#bbcde8;"></div><div style="left:390.7px;top:153px;width:1px;height:12.75px;background:#bbcde8;"></div><div style="left:428.8px;top:153px;width:1px;height:12.75px;background:#bbcde8;"></div><div style="left:467px;top:153px;width:1px;height:12.75px;background:#bbcde8;"></div><div class="t" style="left:-167.8px;width:200px;text-align:right;top:153.575px;color:#262a33;font-size:8.65px;">-23.89</div><div class="t" style="left:-128px;width:200px;text-align:right;top:153.575px;color:#262a33;font-size:8.65px;">-2.41</div><div class="t" style="left:74.7px;width:200px;text-align:right;top:153.575px;color:#e0303a;font-size:8.65px;">70.50</div><div class="t" style="left:112.8px;width:200px;text-align:right;top:153.575px;color:#262a33;font-size:8.65px;">-24.12</div><div class="t" style="left:151.2px;width:200px;text-align:right;top:153.575px;color:#262a33;font-size:8.65px;">-2.46</div><div style="left:-2px;top:165.75px;width:237.8px;height:13.75px;background:#a9c1e1;border-top:1px solid #bbcde8;"></div><div style="left:238.4px;top:165.75px;width:268.6px;height:13.75px;background:#a9c1e1;border-top:1px solid #bbcde8;"></div><div style="left:34px;top:165.75px;width:1px;height:12.75px;background:#bbcde8;"></div><div style="left:73.3px;top:165.75px;width:1px;height:12.75px;background:#bbcde8;"></div><div style="left:112.8px;top:165.75px;width:1px;height:12.75px;background:#bbcde8;"></div><div style="left:152.5px;top:165.75px;width:1px;height:12.75px;background:#bbcde8;"></div><div style="left:192px;top:165.75px;width:1px;height:12.75px;background:#bbcde8;"></div><div style="left:276.5px;top:165.75px;width:1px;height:12.75px;background:#bbcde8;"></div><div style="left:314.5px;top:165.75px;width:1px;height:12.75px;background:#bbcde8;"></div><div style="left:352.7px;top:165.75px;width:1px;height:12.75px;background:#bbcde8;"></div><div style="left:390.7px;top:165.75px;width:1px;height:12.75px;background:#bbcde8;"></div><div style="left:428.8px;top:165.75px;width:1px;height:12.75px;background:#bbcde8;"></div><div style="left:467px;top:165.75px;width:1px;height:12.75px;background:#bbcde8;"></div><div class="t" style="left:-167.8px;width:200px;text-align:right;top:166.325px;color:#262a33;font-size:8.65px;">-22.53</div><div class="t" style="left:-128px;width:200px;text-align:right;top:166.325px;color:#262a33;font-size:8.65px;">-2.38</div><div class="t" style="left:74.7px;width:200px;text-align:right;top:166.325px;color:#e0303a;font-size:8.65px;">66.40</div><div class="t" style="left:112.8px;width:200px;text-align:right;top:166.325px;color:#262a33;font-size:8.65px;">-22.77</div><div class="t" style="left:151.2px;width:200px;text-align:right;top:166.325px;color:#262a33;font-size:8.65px;">-2.42</div><div style="left:-2px;top:178.5px;width:237.8px;height:13.75px;background:#a9c1e1;border-top:1px solid #bbcde8;"></div><div style="left:238.4px;top:178.5px;width:268.6px;height:13.75px;background:#a9c1e1;border-top:1px solid #bbcde8;"></div><div style="left:34px;top:178.5px;width:1px;height:12.75px;background:#bbcde8;"></div><div style="left:73.3px;top:178.5px;width:1px;height:12.75px;background:#bbcde8;"></div><div style="left:112.8px;top:178.5px;width:1px;height:12.75px;background:#bbcde8;"></div><div style="left:152.5px;top:178.5px;width:1px;height:12.75px;background:#bbcde8;"></div><div style="left:192px;top:178.5px;width:1px;height:12.75px;background:#bbcde8;"></div><div style="left:276.5px;top:178.5px;width:1px;height:12.75px;background:#bbcde8;"></div><div style="left:314.5px;top:178.5px;width:1px;height:12.75px;background:#bbcde8;"></div><div style="left:352.7px;top:178.5px;width:1px;height:12.75px;background:#bbcde8;"></div><div style="left:390.7px;top:178.5px;width:1px;height:12.75px;background:#bbcde8;"></div><div style="left:428.8px;top:178.5px;width:1px;height:12.75px;background:#bbcde8;"></div><div style="left:467px;top:178.5px;width:1px;height:12.75px;background:#bbcde8;"></div><div class="t" style="left:-167.8px;width:200px;text-align:right;top:179.075px;color:#262a33;font-size:8.65px;">-21.25</div><div class="t" style="left:-128px;width:200px;text-align:right;top:179.075px;color:#262a33;font-size:8.65px;">-2.35</div><div class="t" style="left:74.7px;width:200px;text-align:right;top:179.075px;color:#e0303a;font-size:8.65px;">62.60</div><div class="t" style="left:112.8px;width:200px;text-align:right;top:179.075px;color:#262a33;font-size:8.65px;">-21.49</div><div class="t" style="left:151.2px;width:200px;text-align:right;top:179.075px;color:#262a33;font-size:8.65px;">-2.39</div><div style="left:-2px;top:191.25px;width:237.8px;height:13.75px;background:#a9c1e1;border-top:1px solid #bbcde8;"></div><div style="left:238.4px;top:191.25px;width:268.6px;height:13.75px;background:#a9c1e1;border-top:1px solid #bbcde8;"></div><div style="left:34px;top:191.25px;width:1px;height:12.75px;background:#bbcde8;"></div><div style="left:73.3px;top:191.25px;width:1px;height:12.75px;background:#bbcde8;"></div><div style="left:112.8px;top:191.25px;width:1px;height:12.75px;background:#bbcde8;"></div><div style="left:152.5px;top:191.25px;width:1px;height:12.75px;background:#bbcde8;"></div><div style="left:192px;top:191.25px;width:1px;height:12.75px;background:#bbcde8;"></div><div style="left:276.5px;top:191.25px;width:1px;height:12.75px;background:#bbcde8;"></div><div style="left:314.5px;top:191.25px;width:1px;height:12.75px;background:#bbcde8;"></div><div style="left:352.7px;top:191.25px;width:1px;height:12.75px;background:#bbcde8;"></div><div style="left:390.7px;top:191.25px;width:1px;height:12.75px;background:#bbcde8;"></div><div style="left:428.8px;top:191.25px;width:1px;height:12.75px;background:#bbcde8;"></div><div style="left:467px;top:191.25px;width:1px;height:12.75px;background:#bbcde8;"></div><div class="t" style="left:-167.8px;width:200px;text-align:right;top:191.825px;color:#262a33;font-size:8.65px;">-20.06</div><div class="t" style="left:-128px;width:200px;text-align:right;top:191.825px;color:#262a33;font-size:8.65px;">-2.31</div><div class="t" style="left:74.7px;width:200px;text-align:right;top:191.825px;color:#e0303a;font-size:8.65px;">58.95</div><div class="t" style="left:112.8px;width:200px;text-align:right;top:191.825px;color:#262a33;font-size:8.65px;">-20.28</div><div class="t" style="left:151.2px;width:200px;text-align:right;top:191.825px;color:#262a33;font-size:8.65px;">-2.35</div><div style="left:-2px;top:204px;width:237.8px;height:13.75px;background:#a9c1e1;border-top:1px solid #bbcde8;"></div><div style="left:238.4px;top:204px;width:268.6px;height:13.75px;background:#a9c1e1;border-top:1px solid #bbcde8;"></div><div style="left:34px;top:204px;width:1px;height:12.75px;background:#bbcde8;"></div><div style="left:73.3px;top:204px;width:1px;height:12.75px;background:#bbcde8;"></div><div style="left:112.8px;top:204px;width:1px;height:12.75px;background:#bbcde8;"></div><div style="left:152.5px;top:204px;width:1px;height:12.75px;background:#bbcde8;"></div><div style="left:192px;top:204px;width:1px;height:12.75px;background:#bbcde8;"></div><div style="left:276.5px;top:204px;width:1px;height:12.75px;background:#bbcde8;"></div><div style="left:314.5px;top:204px;width:1px;height:12.75px;background:#bbcde8;"></div><div style="left:352.7px;top:204px;width:1px;height:12.75px;background:#bbcde8;"></div><div style="left:390.7px;top:204px;width:1px;height:12.75px;background:#bbcde8;"></div><div style="left:428.8px;top:204px;width:1px;height:12.75px;background:#bbcde8;"></div><div style="left:467px;top:204px;width:1px;height:12.75px;background:#bbcde8;"></div><div class="t" style="left:-167.8px;width:200px;text-align:right;top:204.575px;color:#262a33;font-size:8.65px;">-18.93</div><div class="t" style="left:-128px;width:200px;text-align:right;top:204.575px;color:#262a33;font-size:8.65px;">-2.27</div><div class="t" style="left:74.7px;width:200px;text-align:right;top:204.575px;color:#e0303a;font-size:8.65px;">55.60</div><div class="t" style="left:112.8px;width:200px;text-align:right;top:204.575px;color:#262a33;font-size:8.65px;">-19.14</div><div class="t" style="left:151.2px;width:200px;text-align:right;top:204.575px;color:#262a33;font-size:8.65px;">-2.31</div><div style="left:-2px;top:216.75px;width:237.8px;height:13.75px;background:#c6e5eb;border-top:1px solid #bbdae1;"></div><div style="left:238.4px;top:216.75px;width:268.6px;height:13.75px;background:#a9c1e1;border-top:1px solid #bbcde8;"></div><div style="left:34px;top:216.75px;width:1px;height:12.75px;background:#bbdae1;"></div><div style="left:73.3px;top:216.75px;width:1px;height:12.75px;background:#bbdae1;"></div><div style="left:112.8px;top:216.75px;width:1px;height:12.75px;background:#bbdae1;"></div><div style="left:152.5px;top:216.75px;width:1px;height:12.75px;background:#bbdae1;"></div><div style="left:192px;top:216.75px;width:1px;height:12.75px;background:#bbdae1;"></div><div style="left:276.5px;top:216.75px;width:1px;height:12.75px;background:#bbcde8;"></div><div style="left:314.5px;top:216.75px;width:1px;height:12.75px;background:#bbcde8;"></div><div style="left:352.7px;top:216.75px;width:1px;height:12.75px;background:#bbcde8;"></div><div style="left:390.7px;top:216.75px;width:1px;height:12.75px;background:#bbcde8;"></div><div style="left:428.8px;top:216.75px;width:1px;height:12.75px;background:#bbcde8;"></div><div style="left:467px;top:216.75px;width:1px;height:12.75px;background:#bbcde8;"></div><div class="t" style="left:-167.8px;width:200px;text-align:right;top:217.325px;color:#262a33;font-size:8.65px;">-17.86</div><div class="t" style="left:-128px;width:200px;text-align:right;top:217.325px;color:#262a33;font-size:8.65px;">-2.23</div><div class="t" style="left:74.7px;width:200px;text-align:right;top:217.325px;color:#e0303a;font-size:8.65px;">52.45</div><div class="t" style="left:112.8px;width:200px;text-align:right;top:217.325px;color:#262a33;font-size:8.65px;">-18.07</div><div class="t" style="left:151.2px;width:200px;text-align:right;top:217.325px;color:#262a33;font-size:8.65px;">-2.27</div><div style="left:-2px;top:229.5px;width:237.8px;height:13.75px;background:#c6e5eb;border-top:1px solid #bbdae1;"></div><div style="left:238.4px;top:229.5px;width:268.6px;height:13.75px;background:#c6e5eb;border-top:1px solid #bbdae1;"></div><div style="left:34px;top:229.5px;width:1px;height:12.75px;background:#bbdae1;"></div><div style="left:73.3px;top:229.5px;width:1px;height:12.75px;background:#bbdae1;"></div><div style="left:112.8px;top:229.5px;width:1px;height:12.75px;background:#bbdae1;"></div><div style="left:152.5px;top:229.5px;width:1px;height:12.75px;background:#bbdae1;"></div><div style="left:192px;top:229.5px;width:1px;height:12.75px;background:#bbdae1;"></div><div style="left:276.5px;top:229.5px;width:1px;height:12.75px;background:#bbdae1;"></div><div style="left:314.5px;top:229.5px;width:1px;height:12.75px;background:#bbdae1;"></div><div style="left:352.7px;top:229.5px;width:1px;height:12.75px;background:#bbdae1;"></div><div style="left:390.7px;top:229.5px;width:1px;height:12.75px;background:#bbdae1;"></div><div style="left:428.8px;top:229.5px;width:1px;height:12.75px;background:#bbdae1;"></div><div style="left:467px;top:229.5px;width:1px;height:12.75px;background:#bbdae1;"></div><div class="t" style="left:-167.8px;width:200px;text-align:right;top:230.075px;color:#262a33;font-size:8.65px;">-16.85</div><div class="t" style="left:-128px;width:200px;text-align:right;top:230.075px;color:#262a33;font-size:8.65px;">-2.19</div><div class="t" style="left:74.7px;width:200px;text-align:right;top:230.075px;color:#e0303a;font-size:8.65px;">49.55</div><div class="t" style="left:112.8px;width:200px;text-align:right;top:230.075px;color:#262a33;font-size:8.65px;">-17.07</div><div class="t" style="left:151.2px;width:200px;text-align:right;top:230.075px;color:#262a33;font-size:8.65px;">-2.23</div><div style="left:-2px;top:242.25px;width:237.8px;height:13.75px;background:#c6e5eb;border-top:1px solid #bbdae1;"></div><div style="left:238.4px;top:242.25px;width:268.6px;height:13.75px;background:#c6e5eb;border-top:1px solid #bbdae1;"></div><div style="left:34px;top:242.25px;width:1px;height:12.75px;background:#bbdae1;"></div><div style="left:73.3px;top:242.25px;width:1px;height:12.75px;background:#bbdae1;"></div><div style="left:112.8px;top:242.25px;width:1px;height:12.75px;background:#bbdae1;"></div><div style="left:152.5px;top:242.25px;width:1px;height:12.75px;background:#bbdae1;"></div><div style="left:192px;top:242.25px;width:1px;height:12.75px;background:#bbdae1;"></div><div style="left:276.5px;top:242.25px;width:1px;height:12.75px;background:#bbdae1;"></div><div style="left:314.5px;top:242.25px;width:1px;height:12.75px;background:#bbdae1;"></div><div style="left:352.7px;top:242.25px;width:1px;height:12.75px;background:#bbdae1;"></div><div style="left:390.7px;top:242.25px;width:1px;height:12.75px;background:#bbdae1;"></div><div style="left:428.8px;top:242.25px;width:1px;height:12.75px;background:#bbdae1;"></div><div style="left:467px;top:242.25px;width:1px;height:12.75px;background:#bbdae1;"></div><div class="t" style="left:-167.8px;width:200px;text-align:right;top:242.825px;color:#262a33;font-size:8.65px;">-15.91</div><div class="t" style="left:-128px;width:200px;text-align:right;top:242.825px;color:#262a33;font-size:8.65px;">-2.14</div><div class="t" style="left:74.7px;width:200px;text-align:right;top:242.825px;color:#e0303a;font-size:8.65px;">46.75</div><div class="t" style="left:112.8px;width:200px;text-align:right;top:242.825px;color:#262a33;font-size:8.65px;">-16.11</div><div class="t" style="left:151.2px;width:200px;text-align:right;top:242.825px;color:#262a33;font-size:8.65px;">-2.18</div><div style="left:-2px;top:255px;width:237.8px;height:13.75px;background:#c6e5eb;border-top:1px solid #bbdae1;"></div><div style="left:238.4px;top:255px;width:268.6px;height:13.75px;background:#c6e5eb;border-top:1px solid #bbdae1;"></div><div style="left:34px;top:255px;width:1px;height:12.75px;background:#bbdae1;"></div><div style="left:73.3px;top:255px;width:1px;height:12.75px;background:#bbdae1;"></div><div style="left:112.8px;top:255px;width:1px;height:12.75px;background:#bbdae1;"></div><div style="left:152.5px;top:255px;width:1px;height:12.75px;background:#bbdae1;"></div><div style="left:192px;top:255px;width:1px;height:12.75px;background:#bbdae1;"></div><div style="left:276.5px;top:255px;width:1px;height:12.75px;background:#bbdae1;"></div><div style="left:314.5px;top:255px;width:1px;height:12.75px;background:#bbdae1;"></div><div style="left:352.7px;top:255px;width:1px;height:12.75px;background:#bbdae1;"></div><div style="left:390.7px;top:255px;width:1px;height:12.75px;background:#bbdae1;"></div><div style="left:428.8px;top:255px;width:1px;height:12.75px;background:#bbdae1;"></div><div style="left:467px;top:255px;width:1px;height:12.75px;background:#bbdae1;"></div><div class="t" style="left:-167.8px;width:200px;text-align:right;top:255.575px;color:#262a33;font-size:8.65px;">-15.02</div><div class="t" style="left:-128px;width:200px;text-align:right;top:255.575px;color:#262a33;font-size:8.65px;">-2.10</div><div class="t" style="left:74.7px;width:200px;text-align:right;top:255.575px;color:#e0303a;font-size:8.65px;">44.20</div><div class="t" style="left:112.8px;width:200px;text-align:right;top:255.575px;color:#262a33;font-size:8.65px;">-15.22</div><div class="t" style="left:151.2px;width:200px;text-align:right;top:255.575px;color:#262a33;font-size:8.65px;">-2.14</div></div><div style="left:234.8px;top:340.5px;width:1px;height:264.5px;background:#bfc6d8;"></div><div style="left:238.4px;top:340.5px;width:1px;height:264.5px;background:#bfc6d8;"></div><div style="left:-2px;top:604px;width:237.8px;height:1px;background:#bfc6d8;"></div><div style="left:238.4px;top:604px;width:281.4px;height:1px;background:#bfc6d8;"></div>
<div style="left:507px;top:340.8px;width:12.8px;height:264.2px;background:#cfd5e5;border-left:1px solid #c3cadb;border-right:1px solid #bcc3d5;"></div><svg style="position:absolute;left:510.6px;top:345.8px" width="6" height="4" viewBox="0 0 6 4"><path d="M3 0.4L5.6 3.6H0.4Z" fill="#5a6880"/></svg><svg style="position:absolute;left:510.6px;top:597.6px" width="6" height="4" viewBox="0 0 6 4"><path d="M3 3.6L5.6 0.4H0.4Z" fill="#5a6880"/></svg><div style="left:511px;top:438.5px;width:5.2px;height:20px;background:#8f98b0;"></div>
<div style="left:-40px;top:615px;width:112px;height:12.6px;background:#ffffff;border:1px solid #bcc3d6;"></div><svg style="position:absolute;left:63.2px;top:619.5px" width="6" height="4" viewBox="0 0 6 4"><path d="M0.9 0.8H5.1L3 3.2Z" fill="#5a6074"/></svg>
<div class="t" style="left:-189.1px;width:200px;text-align:right;top:615.4px;color:#262a33;font-size:8.4px;">Combined</div>
<div style="left:77.6px;top:615px;width:53.6px;height:12.6px;background:#ffffff;border:1px solid #bcc3d6;"></div><div class="t" style="left:81.2px;text-align:left;top:615.4px;color:#262a33;font-size:8.4px;">Auto</div><svg style="position:absolute;left:122.4px;top:619.5px" width="6" height="4" viewBox="0 0 6 4"><path d="M0.9 0.8H5.1L3 3.2Z" fill="#5a6074"/></svg>
<div style="left:424.6px;top:617.4px;width:7.6px;height:7.6px;background:#ffffff;border:1px solid #a9b1c8;"></div>
<div class="t" style="left:317.6px;width:200px;text-align:right;top:615.3px;color:#262a33;font-size:8.4px;">Ignore Today's Trades</div>
<div style="left:-2px;top:630.5px;width:522.3px;height:39.2px;background:#ffffff;border:1px solid #d0d4e2;"></div><div style="left:-1.5px;top:631px;width:521.3px;height:13px;background:linear-gradient(#f7f8fc,#eff1f8);"></div><div style="left:-2px;top:643.8px;width:522.3px;height:1px;background:#d0d4e2;"></div><div style="left:-2px;top:656.5px;width:522.3px;height:1px;background:#d0d4e2;"></div><div style="left:2.9px;top:630.5px;width:1px;height:39.2px;background:#d0d4e2;"></div><div style="left:48.5px;top:630.5px;width:1px;height:39.2px;background:#d0d4e2;"></div><div style="left:94.7px;top:630.5px;width:1px;height:39.2px;background:#d0d4e2;"></div><div style="left:140.9px;top:630.5px;width:1px;height:39.2px;background:#d0d4e2;"></div><div style="left:187px;top:630.5px;width:1px;height:39.2px;background:#d0d4e2;"></div><div style="left:233px;top:630.5px;width:1px;height:39.2px;background:#d0d4e2;"></div><div style="left:279.5px;top:630.5px;width:1px;height:39.2px;background:#d0d4e2;"></div><div style="left:325.8px;top:630.5px;width:1px;height:39.2px;background:#d0d4e2;"></div><div style="left:372px;top:630.5px;width:1px;height:39.2px;background:#d0d4e2;"></div><div style="left:418.3px;top:630.5px;width:1px;height:39.2px;background:#d0d4e2;"></div><div style="left:464.5px;top:630.5px;width:1px;height:39.2px;background:#d0d4e2;"></div><div class="t" style="left:-73.875px;width:200px;text-align:center;top:631.4px;color:#3c404a;font-size:8.3px;letter-spacing:-0.15px;">Cost</div><div class="t" style="left:-27.975px;width:200px;text-align:center;top:631.4px;color:#3c404a;font-size:8.3px;letter-spacing:-0.15px;">Curr Cost</div><div class="t" style="left:18.225px;width:200px;text-align:center;top:631.4px;color:#3c404a;font-size:8.3px;letter-spacing:-0.15px;">Commissi...</div><div class="t" style="left:64.375px;width:200px;text-align:center;top:631.4px;color:#3c404a;font-size:8.3px;letter-spacing:-0.15px;">PnL</div><div class="t" style="left:110.425px;width:200px;text-align:center;top:631.4px;color:#3c404a;font-size:8.3px;letter-spacing:-0.15px;">PnL%</div><div class="t" style="left:156.675px;width:200px;text-align:center;top:631.4px;color:#3c404a;font-size:8.3px;letter-spacing:-0.15px;">Delta</div><div class="t" style="left:203.075px;width:200px;text-align:center;top:631.4px;color:#3c404a;font-size:8.3px;letter-spacing:-0.15px;">Gamma</div><div class="t" style="left:249.325px;width:200px;text-align:center;top:631.4px;color:#3c404a;font-size:8.3px;letter-spacing:-0.15px;">Theta</div><div class="t" style="left:295.575px;width:200px;text-align:center;top:631.4px;color:#3c404a;font-size:8.3px;letter-spacing:-0.15px;">Vega</div><div class="t" style="left:341.825px;width:200px;text-align:center;top:631.4px;color:#3c404a;font-size:8.3px;letter-spacing:-0.15px;">T/D</div><div class="t" style="left:392.575px;width:200px;text-align:center;top:631.4px;color:#3c404a;font-size:8.3px;letter-spacing:-0.15px;">Plot</div><div class="t" style="left:-153.3px;width:200px;text-align:right;top:644.7px;color:#262a33;font-size:8.65px;">2,079.20</div><div class="t" style="left:-107.1px;width:200px;text-align:right;top:644.7px;color:#262a33;font-size:8.65px;">-2,050.00</div><div class="t" style="left:-60.9px;width:200px;text-align:right;top:644.7px;color:#262a33;font-size:8.65px;">30.80</div><div class="t" style="left:-14.8px;width:200px;text-align:right;top:644.7px;color:#3f9a3f;font-size:8.65px;">29.20</div><div class="t" style="left:31.2px;width:200px;text-align:right;top:644.7px;color:#3f9a3f;font-size:8.65px;">0.16%</div><div class="t" style="left:77.7px;width:200px;text-align:right;top:644.7px;color:#262a33;font-size:8.65px;">7.56</div><div class="t" style="left:124px;width:200px;text-align:right;top:644.7px;color:#262a33;font-size:8.65px;">-0.02</div><div class="t" style="left:170.2px;width:200px;text-align:right;top:644.7px;color:#262a33;font-size:8.65px;">32.85</div><div class="t" style="left:216.5px;width:200px;text-align:right;top:644.7px;color:#262a33;font-size:8.65px;">-144.22</div><div class="t" style="left:262.7px;width:200px;text-align:right;top:644.7px;color:#262a33;font-size:8.65px;">4.3</div><div style="left:488.1px;top:646.1px;width:8.8px;height:8.8px;background:#ffffff;border:1px solid #a3adc4;"></div><svg style="position:absolute;left:489.4px;top:647.3px" width="6.4" height="6.4" viewBox="0 0 6.4 6.4"><path d="M0.9 3.4L2.6 5.2L5.6 0.9" fill="none" stroke="#4d5b7b" stroke-width="1.15"/></svg><div style="left:0px;top:648.7px;width:1.6px;height:4px;background:#b4d4f0;"></div><div class="t" style="left:-153.3px;width:200px;text-align:right;top:657.4px;color:#262a33;font-size:8.65px;">1,357.80</div><div class="t" style="left:-107.1px;width:200px;text-align:right;top:657.4px;color:#262a33;font-size:8.65px;">-1,330.00</div><div class="t" style="left:-60.9px;width:200px;text-align:right;top:657.4px;color:#262a33;font-size:8.65px;">32.20</div><div class="t" style="left:-14.8px;width:200px;text-align:right;top:657.4px;color:#3f9a3f;font-size:8.65px;">27.80</div><div class="t" style="left:31.2px;width:200px;text-align:right;top:657.4px;color:#3f9a3f;font-size:8.65px;">0.25%</div><div class="t" style="left:77.7px;width:200px;text-align:right;top:657.4px;color:#262a33;font-size:8.65px;">5.33</div><div class="t" style="left:124px;width:200px;text-align:right;top:657.4px;color:#262a33;font-size:8.65px;">-0.02</div><div class="t" style="left:170.2px;width:200px;text-align:right;top:657.4px;color:#262a33;font-size:8.65px;">35.91</div><div class="t" style="left:216.5px;width:200px;text-align:right;top:657.4px;color:#262a33;font-size:8.65px;">-133.09</div><div class="t" style="left:262.7px;width:200px;text-align:right;top:657.4px;color:#262a33;font-size:8.65px;">6.7</div><div style="left:488.1px;top:658.8px;width:8.8px;height:8.8px;background:#ffffff;border:1px solid #a3adc4;"></div><svg style="position:absolute;left:489.4px;top:660px" width="6.4" height="6.4" viewBox="0 0 6.4 6.4"><path d="M0.9 3.4L2.6 5.2L5.6 0.9" fill="none" stroke="#4d5b7b" stroke-width="1.15"/></svg><div style="left:0px;top:661.4px;width:1.6px;height:4px;background:#b4d4f0;"></div>
<div style="left:0px;top:670px;width:1080px;height:2px;background:#cdd2e3;"></div>
<div style="left:0px;top:672px;width:1080px;height:1px;background:#6b768f;"></div>
<div style="left:0px;top:673px;width:1080px;height:2px;background:#2a3756;"></div>
<div style="left:529px;top:109.4px;width:551px;height:20px;background:#d5d9e8;"></div>
<div style="left:528.8px;top:128px;width:552px;height:527px;background:#dde1ee;border-left:1px solid #b4bbcd;border-top:1px solid #aeb6c9;"></div>
<div style="left:528.5px;top:110.2px;width:51.5px;height:18.8px;background:#dde1ee;border:1px solid #b4bbcd;border-top-color:#c6ccdc;border-bottom:none;border-radius:2px 2px 0 0;"></div>
<div class="t" style="left:454.091px;width:200px;text-align:center;top:113px;color:#262a33;font-size:8.4px;letter-spacing:-0.319px;">Risk Chart</div>
<div style="left:579px;top:110.2px;width:55px;height:18.3px;background:#d1d6e5;border:1px solid #b4bbcd;border-top-color:#c6ccdc;border-radius:2px 2px 0 0;"></div>
<div class="t" style="left:506.382px;width:200px;text-align:center;top:113px;color:#262a33;font-size:8.4px;letter-spacing:-0.237px;">Price Chart</div>
<div style="left:633px;top:110.2px;width:84.8px;height:18.3px;background:#d1d6e5;border:1px solid #b4bbcd;border-top-color:#c6ccdc;border-radius:2px 2px 0 0;"></div>
<div class="t" style="left:575.291px;width:200px;text-align:center;top:113px;color:#262a33;font-size:8.4px;letter-spacing:-0.218px;">Movement Analysis</div>
<div style="left:716.8px;top:110.2px;width:44.8px;height:18.3px;background:#d1d6e5;border:1px solid #b4bbcd;border-top-color:#c6ccdc;border-radius:2px 2px 0 0;"></div>
<div class="t" style="left:639.137px;width:200px;text-align:center;top:113px;color:#262a33;font-size:8.4px;letter-spacing:-0.127px;">Volatility</div>
<div style="left:760.6px;top:110.2px;width:109.8px;height:18.3px;background:#d1d6e5;border:1px solid #b4bbcd;border-top-color:#c6ccdc;border-radius:2px 2px 0 0;"></div>
<div class="t" style="left:715.438px;width:200px;text-align:center;top:113px;color:#262a33;font-size:8.4px;letter-spacing:-0.124px;">Statistics &amp; Fundamentals</div>
<div class="t" style="left:533.3px;text-align:left;top:131px;color:#262a33;font-size:8.4px;">Vol Adjust</div>
<div style="left:574.4px;top:130.8px;width:34.4px;height:11.8px;background:#ffffff;border:1px solid #b9c0d2;"></div>
<div class="t" style="left:395px;width:200px;text-align:right;top:131px;color:#262a33;font-size:8.4px;">0</div>
<svg style="position:absolute;left:600.6px;top:132.4px" width="6" height="9" viewBox="0 0 6 9"><path d="M3 0.9L5 3.3H1Z M3 8.1L5 5.7H1Z" fill="#6a7288"/></svg>
<div class="t" style="left:848.887px;width:200px;text-align:right;top:131px;color:#262a33;font-size:8.4px;letter-spacing:-0.113px;">Projection</div>
<div style="left:1053.6px;top:130.8px;width:40px;height:11.8px;background:#ffffff;border:1px solid #b9c0d2;"></div>
<div class="t" style="left:1055.6px;text-align:left;top:131px;color:#262a33;font-size:8.7px;letter-spacing:0.25px;">21/11/2025</div>
<div style="left:528.8px;top:144.5px;width:552px;height:510.5px;background:#ffffff;"></div>
<svg style="position:absolute;left:0;top:0" width="1080" height="675" viewBox="0 0 1080 675" font-family="Liberation Sans, sans-serif"><rect x="816.2" y="157.45" width="76.8" height="355.98" fill="#8fc9da"/><rect x="835.1" y="157.45" width="37" height="355.98" fill="#4b80bf"/><path d="M563.7 157.45H1080 M563.7 178.39H1080 M563.7 199.33H1080 M563.7 220.27H1080 M563.7 241.21H1080 M563.7 262.15H1080 M563.7 283.09H1080 M563.7 304.03H1080 M563.7 324.97H1080 M563.7 345.91H1080 M563.7 366.85H1080 M563.7 387.79H1080 M563.7 408.73H1080 M563.7 429.67H1080 M563.7 450.61H1080 M563.7 471.55H1080 M563.7 492.49H1080 M563.7 513.43H1080 M578.30 157.45V515.43 M637.21 157.45V515.43 M696.12 157.45V515.43 M755.03 157.45V515.43 M813.94 157.45V515.43 M872.85 157.45V515.43 M931.76 157.45V515.43 M990.67 157.45V515.43 M1049.58 157.45V515.43" stroke="#dcdcdc" stroke-opacity="0.7" stroke-width="1" fill="none"/><path d="M566.7 157.45V513.43" stroke="#efedea" stroke-width="1" fill="none"/><text x="561.3" y="160.15" text-anchor="end" fill="#2a2a2a" font-size="7.4" >108%</text><text x="561.3" y="181.09" text-anchor="end" fill="#2a2a2a" font-size="7.4" >97%</text><text x="561.3" y="202.03" text-anchor="end" fill="#2a2a2a" font-size="7.4" >86%</text><text x="561.3" y="222.97" text-anchor="end" fill="#2a2a2a" font-size="7.4" >75%</text><text x="561.3" y="243.91" text-anchor="end" fill="#2a2a2a" font-size="7.4" >65%</text><text x="561.3" y="264.85" text-anchor="end" fill="#2a2a2a" font-size="7.4" >54%</text><text x="561.3" y="285.79" text-anchor="end" fill="#2a2a2a" font-size="7.4" >43%</text><text x="561.3" y="306.73" text-anchor="end" fill="#2a2a2a" font-size="7.4" >32%</text><text x="561.3" y="327.67" text-anchor="end" fill="#2a2a2a" font-size="7.4" >22%</text><text x="561.3" y="348.61" text-anchor="end" fill="#2a2a2a" font-size="7.4" >11%</text><rect x="532.9" y="361.5" width="30.3" height="9.6" fill="#10901a"/><text x="561.3" y="369.55" text-anchor="end" fill="#ffffff" font-size="7.4" >0%</text><text x="561.3" y="390.49" text-anchor="end" fill="#2a2a2a" font-size="7.4" >-11%</text><text x="561.3" y="411.43" text-anchor="end" fill="#2a2a2a" font-size="7.4" >-22%</text><text x="561.3" y="432.37" text-anchor="end" fill="#2a2a2a" font-size="7.4" >-32%</text><text x="561.3" y="453.31" text-anchor="end" fill="#2a2a2a" font-size="7.4" >-43%</text><text x="561.3" y="474.25" text-anchor="end" fill="#2a2a2a" font-size="7.4" >-54%</text><text x="561.3" y="495.19" text-anchor="end" fill="#2a2a2a" font-size="7.4" >-65%</text><text x="561.3" y="516.13" text-anchor="end" fill="#2a2a2a" font-size="7.4" >-75%</text><text x="577.7" y="153.9" text-anchor="middle" fill="#333" font-size="7.6" >-14.4%</text><text x="636.61" y="153.9" text-anchor="middle" fill="#333" font-size="7.6" >-11.3%</text><text x="695.52" y="153.9" text-anchor="middle" fill="#333" font-size="7.6" >-8.2%</text><text x="754.43" y="153.9" text-anchor="middle" fill="#333" font-size="7.6" >-5.2%</text><text x="813.34" y="153.9" text-anchor="middle" fill="#333" font-size="7.6" >-2.1%</text><text x="931.16" y="153.9" text-anchor="middle" fill="#333" font-size="7.6" >4.0%</text><text x="990.07" y="153.9" text-anchor="middle" fill="#333" font-size="7.6" >7.1%</text><text x="1048.98" y="153.9" text-anchor="middle" fill="#333" font-size="7.6" >10.1%</text><text x="864.8" y="153.9" text-anchor="start" fill="#333" font-size="7.6" >0.9%</text><rect x="844.9" y="145.9" width="19.4" height="8.6" fill="#e9edf5" stroke="#7e8ba3" stroke-width="0.8"/><text x="854.7" y="153.9" text-anchor="middle" fill="#333" font-size="7.6" >0.0%</text><text x="578.3" y="524.2" text-anchor="middle" fill="#2a2a2a" font-size="7.6" >5600</text><text x="637.21" y="524.2" text-anchor="middle" fill="#2a2a2a" font-size="7.6" >5800</text><text x="696.12" y="524.2" text-anchor="middle" fill="#2a2a2a" font-size="7.6" >6000</text><text x="755.03" y="524.2" text-anchor="middle" fill="#2a2a2a" font-size="7.6" >6200</text><text x="813.94" y="524.2" text-anchor="middle" fill="#2a2a2a" font-size="7.6" >6400</text><text x="881.05" y="524.2" text-anchor="end" fill="#2a2a2a" font-size="7.6" >600</text><text x="931.76" y="524.2" text-anchor="middle" fill="#2a2a2a" font-size="7.6" >6800</text><text x="990.67" y="524.2" text-anchor="middle" fill="#2a2a2a" font-size="7.6" >7000</text><text x="1049.58" y="524.2" text-anchor="middle" fill="#2a2a2a" font-size="7.6" >7200</text><text transform="translate(824.4 187) rotate(-90)" fill="#5fa0cc" font-size="7.4">6408.71</text><text transform="translate(843.4 187) rotate(-90)" fill="#98bbe8" font-size="7.4">6473.73</text><text transform="translate(873 187) rotate(-90)" fill="#98bbe8" font-size="7.4">6603.79</text><text transform="translate(892.4 187) rotate(-90)" fill="#5fa0cc" font-size="7.4">6668.81</text><path d="M800.6 157.45V513.43" stroke="#b03cb4" stroke-width="1" stroke-dasharray="3.6 3.4" fill="none"/><text transform="translate(800 512.2) rotate(-90)" fill="#a02ca4" font-size="7.8">6355.83</text><text x="683" y="507.7" text-anchor="middle" fill="#a02ca4" font-size="7.4" >31.6%</text><text x="970.5" y="507.7" text-anchor="middle" fill="#a02ca4" font-size="7.4" >68.4%</text><path d="M566.2 473.3C568.2 472.8 571.8 472.1 578.2 470.4C584.6 468.7 594.6 466.1 604.4 463.3C614.2 460.5 626.7 456.9 637.1 453.3C647.5 449.7 656.9 445.8 666.7 441.6C676.5 437.4 686.2 432.9 696 428.2C705.8 423.5 715.8 418.2 725.6 413.3C735.5 408.4 745.7 403.3 755.1 398.9C764.5 394.5 777.7 388.7 782.2 386.7" stroke="#f26a6a" stroke-width="1" fill="none"/><path d="M782.2 386.7C784.8 385.7 792.2 382.6 797.8 380.7C803.4 378.8 809.8 376.9 816 375.2C822.2 373.5 828.5 371.9 835 370.5C841.5 369.1 848.1 367.9 854.7 366.6C861.3 365.4 868.7 364.0 874.6 363C880.5 362.0 883.3 361.2 890 360.4C896.7 359.6 908.1 358.9 915 358.4C921.9 357.9 919.0 357.9 931.5 357.2C944.0 356.5 970.6 354.9 990 354.2C1009.4 353.5 1033.0 353.1 1048 352.8C1063.0 352.5 1074.7 352.5 1080 352.4" stroke="#86d386" stroke-width="1" fill="none"/><path d="M566.2 491.8C568.2 491.3 571.8 490.6 578.2 488.9C584.6 487.2 594.6 484.9 604.4 481.6C614.2 478.3 626.7 473.6 637.1 469.3C647.5 465.0 656.9 460.8 666.7 455.6C676.5 450.5 686.2 444.0 696 438.4C705.8 432.8 715.8 427.7 725.6 422.2C735.5 416.7 745.7 410.5 755.1 405.6C764.5 400.7 775.3 396.0 782.2 392.9C789.1 389.8 794.3 387.7 796.7 386.7" stroke="#f26a6a" stroke-width="1" fill="none"/><path d="M796.7 386.7C799.9 385.4 809.6 381.5 816 379.2C822.4 376.9 828.5 374.8 835 372.7C841.5 370.6 848.1 368.6 854.7 366.6C861.3 364.6 868.7 362.1 874.6 360.6C880.5 359.1 883.3 358.8 890 357.7C896.7 356.6 908.1 354.9 915 354C921.9 353.1 919.0 353.0 931.5 352C944.0 351.0 970.6 349.0 990 348C1009.4 347.0 1033.0 346.3 1048 345.8C1063.0 345.3 1074.7 345.3 1080 345.2" stroke="#8fa6f2" stroke-width="1" fill="none"/><path d="M874.6 360.2C884 358.2 892 356.8 898.7 355.9" stroke="#e6c6a8" stroke-width="3.2" fill="none"/><path d="M566.7 366.5H1080" stroke="#2a2a2a" stroke-width="1" fill="none"/><path d="M566.7 501.3H783.6L828.6 187.8H835.4L857.9 344.7H1080" stroke="#4a48d8" stroke-width="1.3" fill="none" stroke-linejoin="round"/><path d="M566.7 482.5H783.6L828.7 173.8L835.7 199L858.5 352.1H1080" stroke="#188a22" stroke-width="1.55" fill="none" stroke-linejoin="round"/><circle cx="854.7" cy="366.6" r="2.9" fill="#2fa9b4" stroke="#1d4f60" stroke-width="0.9"/><rect x="569.5" y="160.6" width="110.4" height="75.4" rx="2.4" fill="#e9eef6" stroke="#93a1b6" stroke-width="0.9"/><rect x="574.3" y="166.6" width="2.6" height="8.8" fill="#e84848"/><text x="577.3" y="173.6" text-anchor="start" fill="#666" font-size="7.4" >-4,935.80 Realized PnL</text><rect x="574.3" y="175.93" width="2.6" height="8.8" fill="#44b444"/><text x="577.3" y="182.93" font-size="7.55" fill="#555" xml:space="preserve">+1 <tspan fill="#5a5af0">19dic. 6475 Put Δ</tspan></text><text x="675.2" y="182.93" text-anchor="end" fill="#5a5af0" font-size="7.55" >-40.26</text><rect x="574.3" y="185.26" width="2.6" height="8.8" fill="#44b444"/><text x="577.3" y="192.26" font-size="7.55" fill="#555" xml:space="preserve">-1 <tspan fill="#f05858">19dic. 6450 Put Δ</tspan></text><text x="673.8" y="192.26" text-anchor="end" fill="#f05858" font-size="7.55" >-38.03</text><rect x="574.3" y="194.59" width="2.6" height="8.8" fill="#8696f0"/><text x="577.3" y="201.59" font-size="7.55" fill="#555" xml:space="preserve">+2 <tspan fill="#5a5af0">19dic. 6550 Put Δ</tspan></text><text x="675.2" y="201.59" text-anchor="end" fill="#5a5af0" font-size="7.55" >-47.65</text><rect x="574.3" y="203.92" width="2.6" height="8.8" fill="#8696f0"/><text x="577.3" y="210.92" font-size="7.55" fill="#555" xml:space="preserve">+2 <tspan fill="#5a5af0">19dic. 6300 Put Δ</tspan></text><text x="675.2" y="210.92" text-anchor="end" fill="#5a5af0" font-size="7.55" >-26.85</text><rect x="574.3" y="213.25" width="2.6" height="8.8" fill="#93a2f2"/><text x="577.3" y="220.25" font-size="7.55" fill="#555" xml:space="preserve">-2 <tspan fill="#f05858">19dic. 6475 Put Δ</tspan></text><text x="673.8" y="220.25" text-anchor="end" fill="#f05858" font-size="7.55" >-40.26</text><rect x="574.3" y="222.58" width="2.6" height="8.8" fill="#93a2f2"/><text x="577.3" y="229.58" font-size="7.55" fill="#555" xml:space="preserve">-2 <tspan fill="#f05858">19dic. 6450 Put Δ</tspan></text><text x="673.8" y="229.58" text-anchor="end" fill="#f05858" font-size="7.55" >-38.03</text><rect x="569.5" y="481.6" width="62" height="27.8" rx="2.4" fill="#dfe6ee" fill-opacity="0.82" stroke="#93a1b6" stroke-width="0.9"/><text x="574.5" y="494.2" text-anchor="start" fill="#5cb45c" font-size="7.4" >19/12/2025 (0)</text><text x="574.5" y="503.5" text-anchor="start" fill="#86d386" font-size="7.4" >21/11/2025 (28)</text><rect x="532" y="527.6" width="560" height="122.8" rx="3.4" fill="#e8eff8" stroke="#8494ac" stroke-width="1.15"/><text x="549.8" y="549" text-anchor="middle" fill="#666a72" font-size="7.6" >PnL</text><text x="549.8" y="577.1" text-anchor="middle" fill="#666a72" font-size="7.6" >Delta</text><text x="549.8" y="598.4" text-anchor="middle" fill="#666a72" font-size="7.6" >Gamma</text><text x="549.8" y="619.8" text-anchor="middle" fill="#666a72" font-size="7.6" >Theta</text><text x="549.8" y="640.9" text-anchor="middle" fill="#666a72" font-size="7.6" >Vega</text><rect x="566.3" y="546.2" width="41.9" height="6.3" fill="#f07474" stroke="#5c5056" stroke-width="0.6"/><rect x="608.2" y="546.2" width="59" height="5.3" fill="#f07474" stroke="#5c5056" stroke-width="0.6"/><rect x="667.2" y="546.2" width="58.9" height="3.8" fill="#f07474" stroke="#5c5056" stroke-width="0.6"/><rect x="726.1" y="546.2" width="58.9" height="1.9" fill="#f07474" stroke="#5c5056" stroke-width="0.6"/><rect x="785" y="546.2" width="58.9" height="0.9" fill="#f07474" stroke="#5c5056" stroke-width="0.6"/><rect x="843.9" y="546" width="58.9" height="0.2" fill="#7d86a8" stroke="#55585f" stroke-width="0.6"/><rect x="902.8" y="545.5" width="58.9" height="0.7" fill="#7d86a8" stroke="#55585f" stroke-width="0.6"/><rect x="961.7" y="545.5" width="58.9" height="0.7" fill="#7d86a8" stroke="#55585f" stroke-width="0.6"/><rect x="1020.6" y="545.5" width="59.9" height="0.7" fill="#7d86a8" stroke="#55585f" stroke-width="0.6"/><path d="M566.3 546.2H1080" stroke="#55585f" stroke-width="0.7" fill="none"/><text x="578.3" y="538.4" text-anchor="middle" fill="#f26464" font-size="7.2" >-54%</text><text x="578.3" y="545.6" text-anchor="middle" fill="#f26464" font-size="7.2" >-9937</text><text x="637.21" y="538.4" text-anchor="middle" fill="#f26464" font-size="7.2" >-44%</text><text x="637.21" y="545.6" text-anchor="middle" fill="#f26464" font-size="7.2" >-8233</text><text x="696.12" y="538.4" text-anchor="middle" fill="#f26464" font-size="7.2" >-31%</text><text x="696.12" y="545.6" text-anchor="middle" fill="#f26464" font-size="7.2" >-5707</text><text x="755.03" y="538.4" text-anchor="middle" fill="#f26464" font-size="7.2" >-16%</text><text x="755.03" y="545.6" text-anchor="middle" fill="#f26464" font-size="7.2" >-3013</text><text x="813.94" y="538.4" text-anchor="middle" fill="#f26464" font-size="7.2" >-5%</text><text x="813.94" y="545.6" text-anchor="middle" fill="#f26464" font-size="7.2" >-912</text><text x="872.85" y="553.4" text-anchor="middle" fill="#6a74f4" font-size="7.2" >520</text><text x="872.85" y="559.9" text-anchor="middle" fill="#6a74f4" font-size="7.2" >2%</text><text x="931.76" y="553.4" text-anchor="middle" fill="#6a74f4" font-size="7.2" >901</text><text x="931.76" y="559.9" text-anchor="middle" fill="#6a74f4" font-size="7.2" >5%</text><text x="990.67" y="553.4" text-anchor="middle" fill="#6a74f4" font-size="7.2" >1154</text><text x="990.67" y="559.9" text-anchor="middle" fill="#6a74f4" font-size="7.2" >6%</text><text x="1049.58" y="553.4" text-anchor="middle" fill="#6a74f4" font-size="7.2" >1271</text><text x="1049.58" y="559.9" text-anchor="middle" fill="#6a74f4" font-size="7.2" >7%</text><rect x="566.3" y="571.3" width="41.9" height="3" fill="#5273f2" stroke="#3c4468" stroke-width="0.6"/><rect x="608.2" y="569" width="59" height="5.3" fill="#5273f2" stroke="#3c4468" stroke-width="0.6"/><rect x="667.2" y="567" width="58.9" height="7.3" fill="#5273f2" stroke="#3c4468" stroke-width="0.6"/><rect x="726.1" y="568" width="58.9" height="6.3" fill="#5273f2" stroke="#3c4468" stroke-width="0.6"/><rect x="785" y="570" width="58.9" height="4.3" fill="#5273f2" stroke="#3c4468" stroke-width="0.6"/><rect x="843.9" y="572.6" width="58.9" height="1.7" fill="#5273f2" stroke="#3c4468" stroke-width="0.6"/><rect x="902.8" y="573.6" width="58.9" height="0.7" fill="#7d86a8" stroke="#55585f" stroke-width="0.6"/><rect x="961.7" y="573.8" width="58.9" height="0.5" fill="#7d86a8" stroke="#55585f" stroke-width="0.6"/><rect x="1020.6" y="574.1" width="59.9" height="0.2" fill="#7d86a8" stroke="#55585f" stroke-width="0.6"/><path d="M566.3 574.3H1080" stroke="#55585f" stroke-width="0.7" fill="none"/><text x="578.3" y="581.4" text-anchor="middle" fill="#6a74f4" font-size="7.2" >6.11</text><text x="637.21" y="581.4" text-anchor="middle" fill="#6a74f4" font-size="7.2" >10.90</text><text x="696.12" y="581.4" text-anchor="middle" fill="#6a74f4" font-size="7.2" >13.77</text><text x="755.03" y="581.4" text-anchor="middle" fill="#6a74f4" font-size="7.2" >12.48</text><text x="813.94" y="581.4" text-anchor="middle" fill="#6a74f4" font-size="7.2" >8.30</text><text x="872.85" y="581.4" text-anchor="middle" fill="#6a74f4" font-size="7.2" >4.24</text><text x="931.76" y="581.4" text-anchor="middle" fill="#6a74f4" font-size="7.2" >1.86</text><text x="990.67" y="581.4" text-anchor="middle" fill="#6a74f4" font-size="7.2" >0.83</text><text x="1049.58" y="581.4" text-anchor="middle" fill="#6a74f4" font-size="7.2" >0.40</text><rect x="566.3" y="588.7" width="41.9" height="6.8" fill="#5273f2" stroke="#3c4468" stroke-width="0.6"/><rect x="608.2" y="588.7" width="59" height="6.8" fill="#5273f2" stroke="#3c4468" stroke-width="0.6"/><rect x="726.1" y="595.5" width="58.9" height="7" fill="#f07474" stroke="#5c5056" stroke-width="0.6"/><rect x="785" y="595.5" width="58.9" height="7" fill="#f07474" stroke="#5c5056" stroke-width="0.6"/><rect x="843.9" y="595.5" width="58.9" height="7" fill="#f07474" stroke="#5c5056" stroke-width="0.6"/><rect x="902.8" y="595.5" width="58.9" height="3.4" fill="#f07474" stroke="#5c5056" stroke-width="0.6"/><path d="M566.3 595.5H1080" stroke="#55585f" stroke-width="0.7" fill="none"/><text x="578.3" y="602.7" text-anchor="middle" fill="#6a74f4" font-size="7.2" >0.02</text><text x="637.21" y="602.7" text-anchor="middle" fill="#6a74f4" font-size="7.2" >0.02</text><text x="696.12" y="602.7" text-anchor="middle" fill="#6a74f4" font-size="7.2" >0.00</text><text x="990.67" y="602.7" text-anchor="middle" fill="#6a74f4" font-size="7.2" >0.00</text><text x="1049.58" y="602.7" text-anchor="middle" fill="#6a74f4" font-size="7.2" >0.00</text><text x="755.03" y="595" text-anchor="middle" fill="#f26464" font-size="7.2" >-0.02</text><text x="813.94" y="595" text-anchor="middle" fill="#f26464" font-size="7.2" >-0.02</text><text x="872.85" y="595" text-anchor="middle" fill="#f26464" font-size="7.2" >-0.02</text><text x="931.76" y="595" text-anchor="middle" fill="#f26464" font-size="7.2" >-0.01</text><rect x="566.3" y="617.4" width="41.9" height="4.3" fill="#f07474" stroke="#5c5056" stroke-width="0.6"/><rect x="608.2" y="617.4" width="59" height="6.1" fill="#f07474" stroke="#5c5056" stroke-width="0.6"/><rect x="667.2" y="617.4" width="58.9" height="5.1" fill="#f07474" stroke="#5c5056" stroke-width="0.6"/><rect x="726.1" y="617.4" width="58.9" height="1.6" fill="#f07474" stroke="#5c5056" stroke-width="0.6"/><rect x="785" y="616" width="58.9" height="1.4" fill="#5273f2" stroke="#3c4468" stroke-width="0.6"/><rect x="843.9" y="615.9" width="58.9" height="1.5" fill="#5273f2" stroke="#3c4468" stroke-width="0.6"/><rect x="902.8" y="616.3" width="58.9" height="1.1" fill="#7d86a8" stroke="#55585f" stroke-width="0.6"/><rect x="961.7" y="616.8" width="58.9" height="0.6" fill="#7d86a8" stroke="#55585f" stroke-width="0.6"/><rect x="1020.6" y="617.1" width="59.9" height="0.3" fill="#7d86a8" stroke="#55585f" stroke-width="0.6"/><path d="M566.3 617.4H1080" stroke="#55585f" stroke-width="0.7" fill="none"/><text x="578.3" y="616.9" text-anchor="middle" fill="#f26464" font-size="7.2" >-84.72</text><text x="637.21" y="616.9" text-anchor="middle" fill="#f26464" font-size="7.2" >-113.63</text><text x="696.12" y="616.9" text-anchor="middle" fill="#f26464" font-size="7.2" >-92.01</text><text x="755.03" y="616.9" text-anchor="middle" fill="#f26464" font-size="7.2" >-30.45</text><text x="813.94" y="624.2" text-anchor="middle" fill="#6a74f4" font-size="7.2" >21.62</text><text x="872.85" y="624.2" text-anchor="middle" fill="#6a74f4" font-size="7.2" >35.97</text><text x="931.76" y="624.2" text-anchor="middle" fill="#6a74f4" font-size="7.2" >28.33</text><text x="990.67" y="624.2" text-anchor="middle" fill="#6a74f4" font-size="7.2" >16.05</text><text x="1049.58" y="624.2" text-anchor="middle" fill="#6a74f4" font-size="7.2" >7.84</text><rect x="566.3" y="633" width="41.9" height="5.2" fill="#5273f2" stroke="#3c4468" stroke-width="0.6"/><rect x="608.2" y="631.4" width="59" height="6.8" fill="#5273f2" stroke="#3c4468" stroke-width="0.6"/><rect x="667.2" y="634" width="58.9" height="4.2" fill="#5273f2" stroke="#3c4468" stroke-width="0.6"/><rect x="726.1" y="638.2" width="58.9" height="1.2" fill="#f07474" stroke="#5c5056" stroke-width="0.6"/><rect x="785" y="638.2" width="58.9" height="5" fill="#f07474" stroke="#5c5056" stroke-width="0.6"/><rect x="843.9" y="638.2" width="58.9" height="5" fill="#f07474" stroke="#5c5056" stroke-width="0.6"/><rect x="902.8" y="638.2" width="58.9" height="2.8" fill="#f07474" stroke="#5c5056" stroke-width="0.6"/><rect x="961.7" y="638.2" width="58.9" height="1.4" fill="#f07474" stroke="#5c5056" stroke-width="0.6"/><rect x="1020.6" y="638.2" width="59.9" height="0.7" fill="#f07474" stroke="#5c5056" stroke-width="0.6"/><path d="M566.3 638.2H1080" stroke="#55585f" stroke-width="0.7" fill="none"/><text x="578.3" y="645.4" text-anchor="middle" fill="#6a74f4" font-size="7.2" >158.63</text><text x="637.21" y="645.4" text-anchor="middle" fill="#6a74f4" font-size="7.2" >189.01</text><text x="696.12" y="645.4" text-anchor="middle" fill="#6a74f4" font-size="7.2" >105.96</text><text x="755.03" y="638.1" text-anchor="middle" fill="#f26464" font-size="7.2" >-39.75</text><text x="813.94" y="638.1" text-anchor="middle" fill="#f26464" font-size="7.2" >-129.23</text><text x="872.85" y="638.1" text-anchor="middle" fill="#f26464" font-size="7.2" >-123.75</text><text x="931.76" y="638.1" text-anchor="middle" fill="#f26464" font-size="7.2" >-76.98</text><text x="990.67" y="638.1" text-anchor="middle" fill="#f26464" font-size="7.2" >-39.27</text><text x="1049.58" y="638.1" text-anchor="middle" fill="#f26464" font-size="7.2" >-19.34</text><rect x="837.9" y="516" width="33" height="134.2" rx="3" fill="#e6edf6" fill-opacity="0.9" stroke="#76859c" stroke-width="0.9"/><text x="854.5" y="524.5" text-anchor="middle" fill="#333" font-size="7.6" >6538.76</text><text x="854.5" y="546.7" text-anchor="middle" fill="#3636e6" font-size="7.6" stroke="#3636e6" stroke-width="0.15">28</text><text x="854.5" y="556.7" text-anchor="middle" fill="#3636e6" font-size="7.6" stroke="#3636e6" stroke-width="0.15">0.1%</text><text x="854.5" y="578" text-anchor="middle" fill="#3636e6" font-size="7.6" stroke="#3636e6" stroke-width="0.15">5.33</text><text x="854.5" y="599.7" text-anchor="middle" fill="#ee3a3a" font-size="7.6" stroke="#ee3a3a" stroke-width="0.15">-0.02</text><text x="854.5" y="621" text-anchor="middle" fill="#3636e6" font-size="7.6" stroke="#3636e6" stroke-width="0.15">35.91</text><text x="854.5" y="642.4" text-anchor="middle" fill="#ee3a3a" font-size="7.6" stroke="#ee3a3a" stroke-width="0.15">-133.09</text></svg>
<div style="left:528.9px;top:654px;width:552px;height:16px;background:#2a3756;"></div>
<div class="t" style="left:1057.5px;text-align:left;top:656.3px;color:#f2f4fa;font-size:8.4px;">100%</div>
<svg style="position:absolute;left:523.2px;top:384.2px" width="3" height="14" viewBox="0 0 3 14"><path d="M0.3 0.3l1.6 1.6m0 -1.6l-1.6 1.6" stroke="#a4aabe" stroke-width="0.8"/><path d="M0.3 2.9l1.6 1.6m0 -1.6l-1.6 1.6" stroke="#a4aabe" stroke-width="0.8"/><path d="M0.3 5.5l1.6 1.6m0 -1.6l-1.6 1.6" stroke="#a4aabe" stroke-width="0.8"/><path d="M0.3 8.100000000000001l1.6 1.6m0 -1.6l-1.6 1.6" stroke="#a4aabe" stroke-width="0.8"/><path d="M0.3 10.700000000000001l1.6 1.6m0 -1.6l-1.6 1.6" stroke="#a4aabe" stroke-width="0.8"/></svg>
</div></body></html>
